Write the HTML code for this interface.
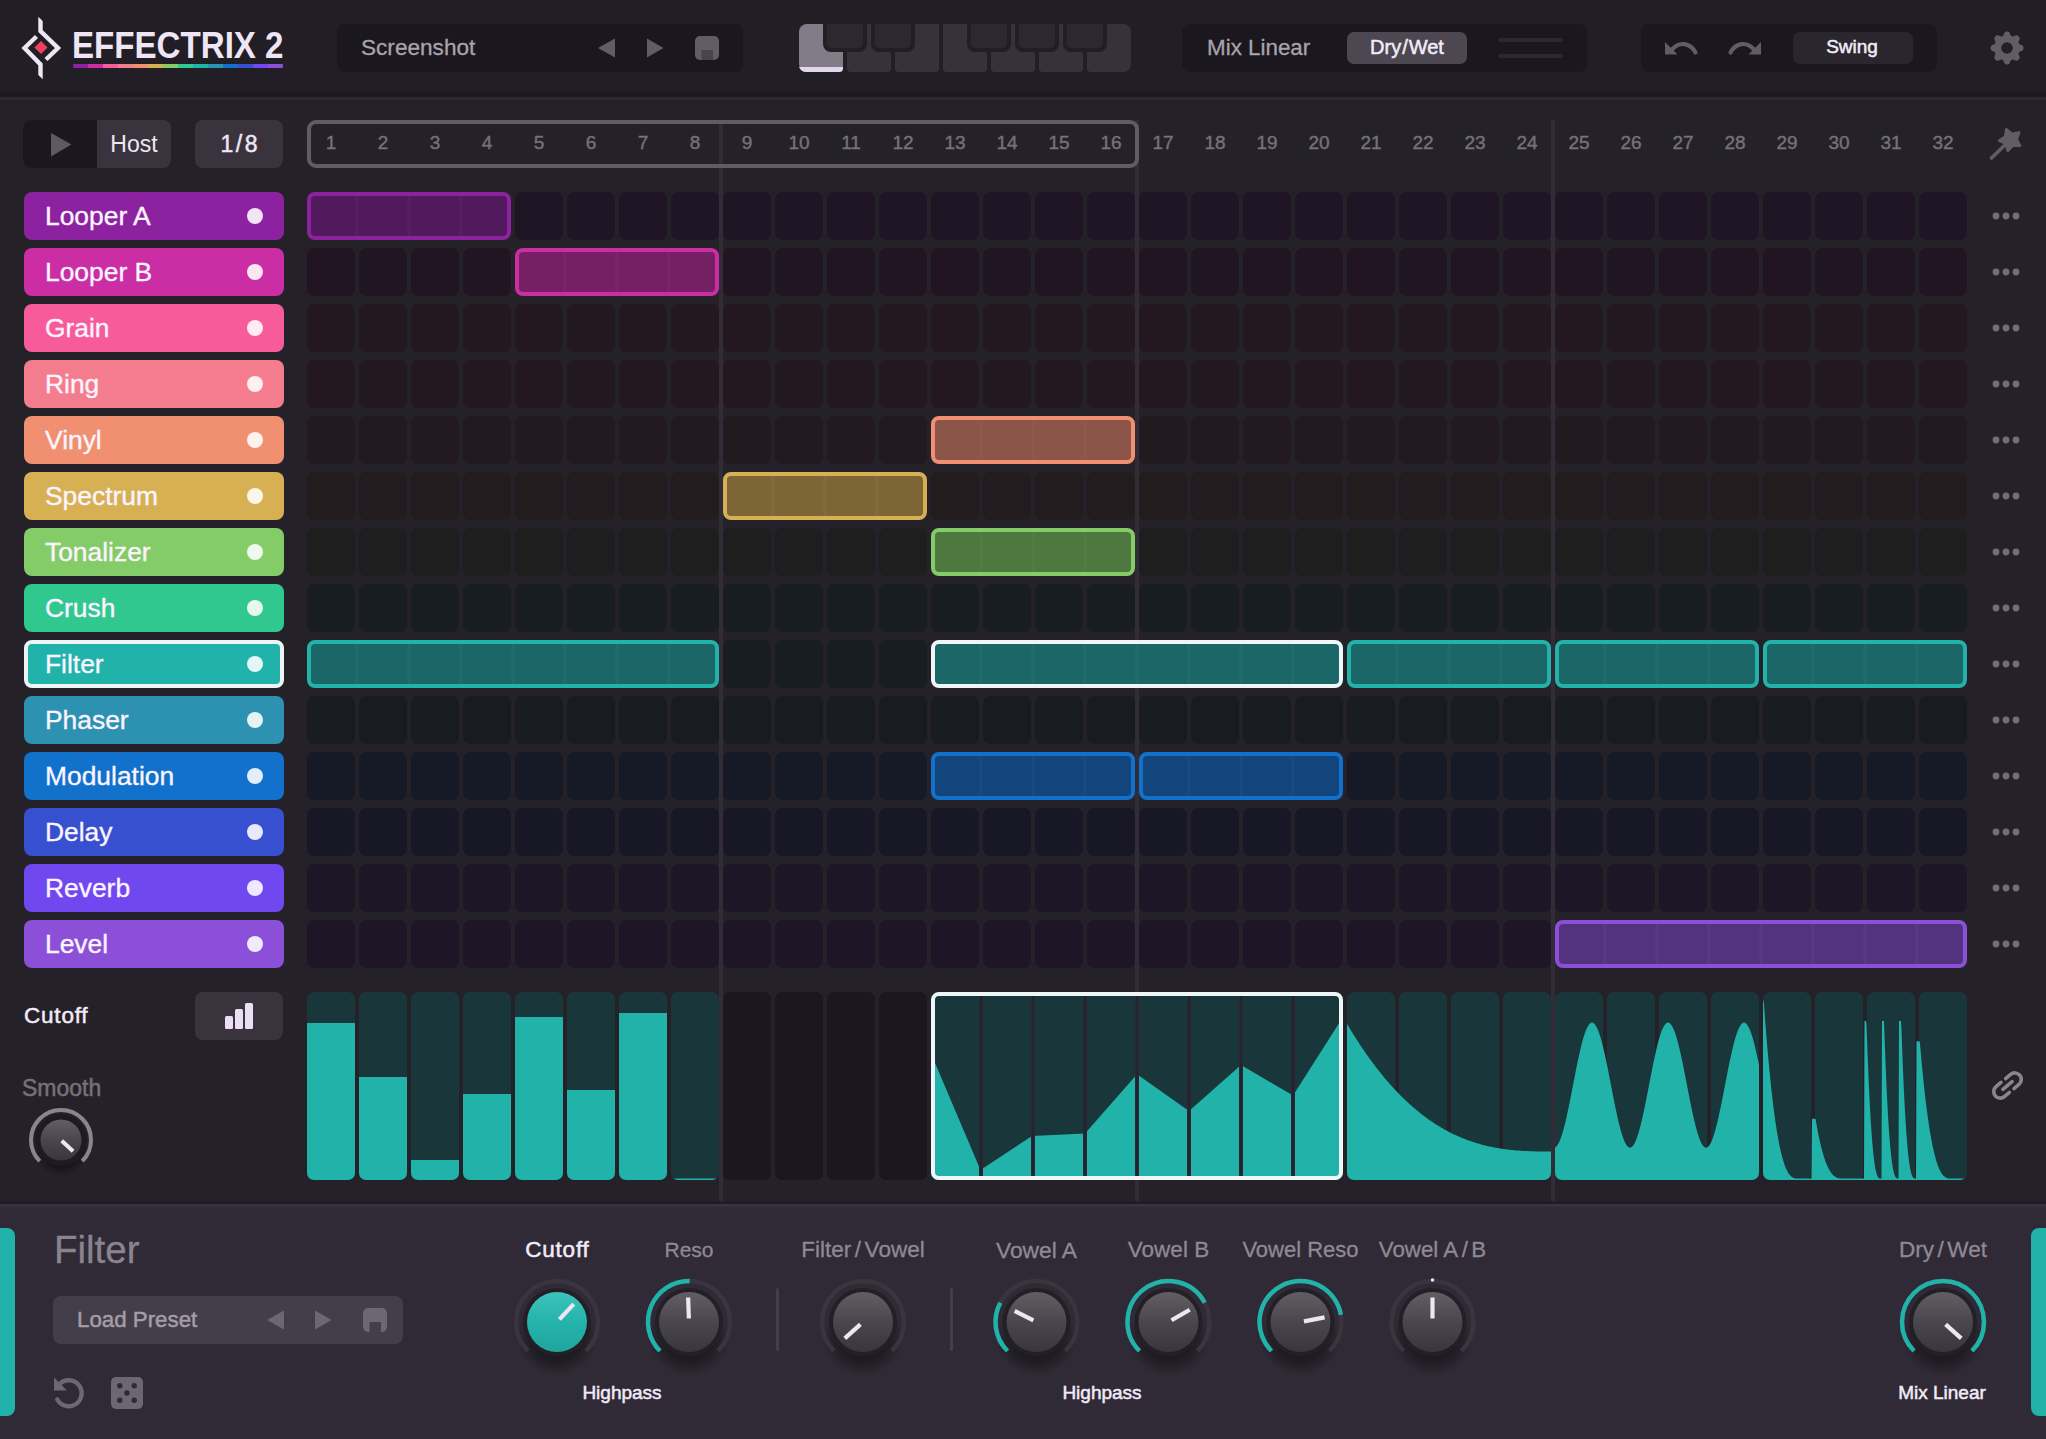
<!DOCTYPE html><html><head><meta charset="utf-8"><title>Effectrix 2</title><style>
*{box-sizing:border-box}
html,body{margin:0;padding:0}
body{width:2046px;height:1439px;overflow:hidden;position:relative;background:#252128;font-family:"Liberation Sans",sans-serif;color:#a9a3ad}
.a{position:absolute}
.box{position:absolute;border-radius:8px}
.t{position:absolute;white-space:nowrap;line-height:1}
.lab{position:absolute;left:24px;width:260px;height:48px;border-radius:8px}
.lab span{position:absolute;left:21px;top:10px;font-size:26.4px;line-height:28px;color:#fbf4ff;white-space:nowrap;-webkit-text-stroke:0.35px #fbf4ff}
.m{-webkit-text-stroke:0.5px currentColor}
.g{-webkit-text-stroke:0.3px currentColor}
.lab i{position:absolute;left:223px;top:16px;width:16px;height:16px;border-radius:50%;background:rgba(255,255,255,0.88)}
.num{position:absolute;top:132px;width:48px;text-align:center;font-size:19px;line-height:22px;color:#76717a;-webkit-text-stroke:0.4px #76717a}
svg{position:absolute;left:0;top:0}
</style></head><body>
<div class="a" style="left:0;top:0;width:2046px;height:93px;background:#221e25"></div>
<div class="a" style="left:0;top:90px;width:2046px;height:7px;background:linear-gradient(#221e25,#1c181f 70%)"></div>
<div class="a" style="left:0;top:97px;width:2046px;height:2.5px;background:#2d2931"></div>
<div class="t" style="left:72px;top:28px;font-size:36.6px;line-height:36px;color:#efe6f5;font-weight:bold;transform-origin:0 0;transform:scaleX(0.905)" id="title">EFFECTRIX 2</div>
<div class="a" style="left:73px;top:64px;width:210px;height:4px;border-radius:1px;overflow:hidden"><i style="display:block;float:left;width:15px;height:4px;background:#8c229f"></i><i style="display:block;float:left;width:15px;height:4px;background:#cb2da5"></i><i style="display:block;float:left;width:15px;height:4px;background:#f85b9a"></i><i style="display:block;float:left;width:15px;height:4px;background:#f47d8d"></i><i style="display:block;float:left;width:15px;height:4px;background:#f09071"></i><i style="display:block;float:left;width:15px;height:4px;background:#d8b054"></i><i style="display:block;float:left;width:15px;height:4px;background:#84cc68"></i><i style="display:block;float:left;width:15px;height:4px;background:#30c88f"></i><i style="display:block;float:left;width:15px;height:4px;background:#21b2aa"></i><i style="display:block;float:left;width:15px;height:4px;background:#2d91b1"></i><i style="display:block;float:left;width:15px;height:4px;background:#1171cb"></i><i style="display:block;float:left;width:15px;height:4px;background:#3650d0"></i><i style="display:block;float:left;width:15px;height:4px;background:#7048f0"></i><i style="display:block;float:left;width:15px;height:4px;background:#8c50d8"></i></div>
<div class="box" style="left:337px;top:24px;width:406px;height:48px;background:#1b171e"></div>
<div class="t" style="left:361px;top:36px;font-size:22.6px;line-height:24px;color:#a9a3ad" id="shot"><span class="g">Screenshot</span></div>
<div class="box" style="left:1182px;top:24px;width:405px;height:48px;background:#1b171e"></div>
<div class="t" style="left:1207px;top:36px;font-size:22.4px;line-height:24px;color:#a9a3ad" id="mixl"><span class="g">Mix Linear</span></div>
<div class="box" style="left:1347px;top:32px;width:120px;height:32px;background:#4c4751;border-radius:7px"></div>
<div class="t" style="left:1347px;top:36px;width:120px;text-align:center;font-size:20px;line-height:22px;color:#f3ebf8" id="dw"><span class="m">Dry<span style="margin:0 1px">/</span>Wet</span></div>
<div class="a" style="left:1498px;top:38px;width:65px;height:4px;border-radius:2px;background:#2c2830"></div>
<div class="a" style="left:1498px;top:54px;width:65px;height:4px;border-radius:2px;background:#2c2830"></div>
<div class="box" style="left:1641px;top:24px;width:296px;height:48px;background:#1b171e"></div>
<div class="box" style="left:1793px;top:32px;width:120px;height:32px;background:#2a262e;border-radius:7px"></div>
<div class="t" style="left:1792px;top:36px;width:120px;text-align:center;font-size:19px;line-height:22px;color:#f3ebf8" id="sw"><span class="m">Swing</span></div>
<div class="box" style="left:23px;top:120px;width:148px;height:48px;background:#38333d;overflow:hidden"><div class="a" style="left:0;top:0;width:74px;height:48px;background:#1b171e"></div></div>
<div class="t" style="left:97px;top:131px;width:74px;text-align:center;font-size:23px;line-height:26px;color:#efe6f5" id="host">Host</div>
<div class="box" style="left:195px;top:120px;width:88px;height:48px;background:#38333d"></div>
<div class="t" style="left:195px;top:131px;width:88px;text-align:center;font-size:23px;line-height:26px;color:#efe6f5;letter-spacing:2.6px;padding-left:2.6px" id="e8"><span class="m">1/8</span></div>
<div class="num" style="left:307px">1</div>
<div class="num" style="left:359px">2</div>
<div class="num" style="left:411px">3</div>
<div class="num" style="left:463px">4</div>
<div class="num" style="left:515px">5</div>
<div class="num" style="left:567px">6</div>
<div class="num" style="left:619px">7</div>
<div class="num" style="left:671px">8</div>
<div class="num" style="left:723px">9</div>
<div class="num" style="left:775px">10</div>
<div class="num" style="left:827px">11</div>
<div class="num" style="left:879px">12</div>
<div class="num" style="left:931px">13</div>
<div class="num" style="left:983px">14</div>
<div class="num" style="left:1035px">15</div>
<div class="num" style="left:1087px">16</div>
<div class="num" style="left:1139px">17</div>
<div class="num" style="left:1191px">18</div>
<div class="num" style="left:1243px">19</div>
<div class="num" style="left:1295px">20</div>
<div class="num" style="left:1347px">21</div>
<div class="num" style="left:1399px">22</div>
<div class="num" style="left:1451px">23</div>
<div class="num" style="left:1503px">24</div>
<div class="num" style="left:1555px">25</div>
<div class="num" style="left:1607px">26</div>
<div class="num" style="left:1659px">27</div>
<div class="num" style="left:1711px">28</div>
<div class="num" style="left:1763px">29</div>
<div class="num" style="left:1815px">30</div>
<div class="num" style="left:1867px">31</div>
<div class="num" style="left:1919px">32</div>
<div class="lab" style="top:192px;background:#8c229f"><span>Looper A</span><i></i></div>
<div class="lab" style="top:248px;background:#cb2da5"><span>Looper B</span><i></i></div>
<div class="lab" style="top:304px;background:#f85b9a"><span>Grain</span><i></i></div>
<div class="lab" style="top:360px;background:#f47d8d"><span>Ring</span><i></i></div>
<div class="lab" style="top:416px;background:#f09071"><span>Vinyl</span><i></i></div>
<div class="lab" style="top:472px;background:#d8b054"><span>Spectrum</span><i></i></div>
<div class="lab" style="top:528px;background:#84cc68"><span>Tonalizer</span><i></i></div>
<div class="lab" style="top:584px;background:#30c88f"><span>Crush</span><i></i></div>
<div class="lab" style="top:640px;background:#21b2aa;border:4px solid #eef3f6"><span style="left:17px;top:6px">Filter</span><i style="left:219px;top:12px"></i></div>
<div class="lab" style="top:696px;background:#2d91b1"><span>Phaser</span><i></i></div>
<div class="lab" style="top:752px;background:#1171cb"><span>Modulation</span><i></i></div>
<div class="lab" style="top:808px;background:#3650d0"><span>Delay</span><i></i></div>
<div class="lab" style="top:864px;background:#7048f0"><span>Reverb</span><i></i></div>
<div class="lab" style="top:920px;background:#8c50d8"><span>Level</span><i></i></div>
<svg width="2046" height="1439" viewBox="0 0 2046 1439"><rect x="719" y="120" width="4" height="1085" fill="#312c35"/><rect x="1135" y="120" width="4" height="1085" fill="#312c35"/><rect x="1551" y="120" width="4" height="1085" fill="#312c35"/><rect x="309" y="122" width="828" height="44" rx="7" fill="none" stroke="#605b64" stroke-width="4"/><rect x="515" y="192" width="48" height="48" rx="7" fill="#201524"/><rect x="567" y="192" width="48" height="48" rx="7" fill="#201524"/><rect x="619" y="192" width="48" height="48" rx="7" fill="#201524"/><rect x="671" y="192" width="48" height="48" rx="7" fill="#201524"/><rect x="723" y="192" width="48" height="48" rx="7" fill="#201524"/><rect x="775" y="192" width="48" height="48" rx="7" fill="#201524"/><rect x="827" y="192" width="48" height="48" rx="7" fill="#201524"/><rect x="879" y="192" width="48" height="48" rx="7" fill="#201524"/><rect x="931" y="192" width="48" height="48" rx="7" fill="#201524"/><rect x="983" y="192" width="48" height="48" rx="7" fill="#201524"/><rect x="1035" y="192" width="48" height="48" rx="7" fill="#201524"/><rect x="1087" y="192" width="48" height="48" rx="7" fill="#201524"/><rect x="1139" y="192" width="48" height="48" rx="7" fill="#201524"/><rect x="1191" y="192" width="48" height="48" rx="7" fill="#201524"/><rect x="1243" y="192" width="48" height="48" rx="7" fill="#201524"/><rect x="1295" y="192" width="48" height="48" rx="7" fill="#201524"/><rect x="1347" y="192" width="48" height="48" rx="7" fill="#201524"/><rect x="1399" y="192" width="48" height="48" rx="7" fill="#201524"/><rect x="1451" y="192" width="48" height="48" rx="7" fill="#201524"/><rect x="1503" y="192" width="48" height="48" rx="7" fill="#201524"/><rect x="1555" y="192" width="48" height="48" rx="7" fill="#201524"/><rect x="1607" y="192" width="48" height="48" rx="7" fill="#201524"/><rect x="1659" y="192" width="48" height="48" rx="7" fill="#201524"/><rect x="1711" y="192" width="48" height="48" rx="7" fill="#201524"/><rect x="1763" y="192" width="48" height="48" rx="7" fill="#201524"/><rect x="1815" y="192" width="48" height="48" rx="7" fill="#201524"/><rect x="1867" y="192" width="48" height="48" rx="7" fill="#201524"/><rect x="1919" y="192" width="48" height="48" rx="7" fill="#201524"/><rect x="309" y="194" width="200" height="44" rx="6" fill="#53195f" stroke="#8c229f" stroke-width="4"/><rect x="355" y="196" width="4" height="40" fill="#ffffff" opacity="0.017"/><rect x="356" y="196" width="2" height="40" fill="#ffffff" opacity="0.017"/><rect x="407" y="196" width="4" height="40" fill="#ffffff" opacity="0.017"/><rect x="408" y="196" width="2" height="40" fill="#ffffff" opacity="0.017"/><rect x="459" y="196" width="4" height="40" fill="#ffffff" opacity="0.017"/><rect x="460" y="196" width="2" height="40" fill="#ffffff" opacity="0.017"/><circle cx="1996" cy="216" r="3.4" fill="#726d77"/><circle cx="2006" cy="216" r="3.4" fill="#726d77"/><circle cx="2016" cy="216" r="3.4" fill="#726d77"/><rect x="307" y="248" width="48" height="48" rx="7" fill="#221523"/><rect x="359" y="248" width="48" height="48" rx="7" fill="#221523"/><rect x="411" y="248" width="48" height="48" rx="7" fill="#221523"/><rect x="463" y="248" width="48" height="48" rx="7" fill="#221523"/><rect x="723" y="248" width="48" height="48" rx="7" fill="#221523"/><rect x="775" y="248" width="48" height="48" rx="7" fill="#221523"/><rect x="827" y="248" width="48" height="48" rx="7" fill="#221523"/><rect x="879" y="248" width="48" height="48" rx="7" fill="#221523"/><rect x="931" y="248" width="48" height="48" rx="7" fill="#221523"/><rect x="983" y="248" width="48" height="48" rx="7" fill="#221523"/><rect x="1035" y="248" width="48" height="48" rx="7" fill="#221523"/><rect x="1087" y="248" width="48" height="48" rx="7" fill="#221523"/><rect x="1139" y="248" width="48" height="48" rx="7" fill="#221523"/><rect x="1191" y="248" width="48" height="48" rx="7" fill="#221523"/><rect x="1243" y="248" width="48" height="48" rx="7" fill="#221523"/><rect x="1295" y="248" width="48" height="48" rx="7" fill="#221523"/><rect x="1347" y="248" width="48" height="48" rx="7" fill="#221523"/><rect x="1399" y="248" width="48" height="48" rx="7" fill="#221523"/><rect x="1451" y="248" width="48" height="48" rx="7" fill="#221523"/><rect x="1503" y="248" width="48" height="48" rx="7" fill="#221523"/><rect x="1555" y="248" width="48" height="48" rx="7" fill="#221523"/><rect x="1607" y="248" width="48" height="48" rx="7" fill="#221523"/><rect x="1659" y="248" width="48" height="48" rx="7" fill="#221523"/><rect x="1711" y="248" width="48" height="48" rx="7" fill="#221523"/><rect x="1763" y="248" width="48" height="48" rx="7" fill="#221523"/><rect x="1815" y="248" width="48" height="48" rx="7" fill="#221523"/><rect x="1867" y="248" width="48" height="48" rx="7" fill="#221523"/><rect x="1919" y="248" width="48" height="48" rx="7" fill="#221523"/><rect x="517" y="250" width="200" height="44" rx="6" fill="#752063" stroke="#cb2da5" stroke-width="4"/><rect x="563" y="252" width="4" height="40" fill="#ffffff" opacity="0.017"/><rect x="564" y="252" width="2" height="40" fill="#ffffff" opacity="0.017"/><rect x="615" y="252" width="4" height="40" fill="#ffffff" opacity="0.017"/><rect x="616" y="252" width="2" height="40" fill="#ffffff" opacity="0.017"/><rect x="667" y="252" width="4" height="40" fill="#ffffff" opacity="0.017"/><rect x="668" y="252" width="2" height="40" fill="#ffffff" opacity="0.017"/><circle cx="1996" cy="272" r="3.4" fill="#726d77"/><circle cx="2006" cy="272" r="3.4" fill="#726d77"/><circle cx="2016" cy="272" r="3.4" fill="#726d77"/><rect x="307" y="304" width="48" height="48" rx="7" fill="#231720"/><rect x="359" y="304" width="48" height="48" rx="7" fill="#231720"/><rect x="411" y="304" width="48" height="48" rx="7" fill="#231720"/><rect x="463" y="304" width="48" height="48" rx="7" fill="#231720"/><rect x="515" y="304" width="48" height="48" rx="7" fill="#231720"/><rect x="567" y="304" width="48" height="48" rx="7" fill="#231720"/><rect x="619" y="304" width="48" height="48" rx="7" fill="#231720"/><rect x="671" y="304" width="48" height="48" rx="7" fill="#231720"/><rect x="723" y="304" width="48" height="48" rx="7" fill="#231720"/><rect x="775" y="304" width="48" height="48" rx="7" fill="#231720"/><rect x="827" y="304" width="48" height="48" rx="7" fill="#231720"/><rect x="879" y="304" width="48" height="48" rx="7" fill="#231720"/><rect x="931" y="304" width="48" height="48" rx="7" fill="#231720"/><rect x="983" y="304" width="48" height="48" rx="7" fill="#231720"/><rect x="1035" y="304" width="48" height="48" rx="7" fill="#231720"/><rect x="1087" y="304" width="48" height="48" rx="7" fill="#231720"/><rect x="1139" y="304" width="48" height="48" rx="7" fill="#231720"/><rect x="1191" y="304" width="48" height="48" rx="7" fill="#231720"/><rect x="1243" y="304" width="48" height="48" rx="7" fill="#231720"/><rect x="1295" y="304" width="48" height="48" rx="7" fill="#231720"/><rect x="1347" y="304" width="48" height="48" rx="7" fill="#231720"/><rect x="1399" y="304" width="48" height="48" rx="7" fill="#231720"/><rect x="1451" y="304" width="48" height="48" rx="7" fill="#231720"/><rect x="1503" y="304" width="48" height="48" rx="7" fill="#231720"/><rect x="1555" y="304" width="48" height="48" rx="7" fill="#231720"/><rect x="1607" y="304" width="48" height="48" rx="7" fill="#231720"/><rect x="1659" y="304" width="48" height="48" rx="7" fill="#231720"/><rect x="1711" y="304" width="48" height="48" rx="7" fill="#231720"/><rect x="1763" y="304" width="48" height="48" rx="7" fill="#231720"/><rect x="1815" y="304" width="48" height="48" rx="7" fill="#231720"/><rect x="1867" y="304" width="48" height="48" rx="7" fill="#231720"/><rect x="1919" y="304" width="48" height="48" rx="7" fill="#231720"/><circle cx="1996" cy="328" r="3.4" fill="#726d77"/><circle cx="2006" cy="328" r="3.4" fill="#726d77"/><circle cx="2016" cy="328" r="3.4" fill="#726d77"/><rect x="307" y="360" width="48" height="48" rx="7" fill="#231820"/><rect x="359" y="360" width="48" height="48" rx="7" fill="#231820"/><rect x="411" y="360" width="48" height="48" rx="7" fill="#231820"/><rect x="463" y="360" width="48" height="48" rx="7" fill="#231820"/><rect x="515" y="360" width="48" height="48" rx="7" fill="#231820"/><rect x="567" y="360" width="48" height="48" rx="7" fill="#231820"/><rect x="619" y="360" width="48" height="48" rx="7" fill="#231820"/><rect x="671" y="360" width="48" height="48" rx="7" fill="#231820"/><rect x="723" y="360" width="48" height="48" rx="7" fill="#231820"/><rect x="775" y="360" width="48" height="48" rx="7" fill="#231820"/><rect x="827" y="360" width="48" height="48" rx="7" fill="#231820"/><rect x="879" y="360" width="48" height="48" rx="7" fill="#231820"/><rect x="931" y="360" width="48" height="48" rx="7" fill="#231820"/><rect x="983" y="360" width="48" height="48" rx="7" fill="#231820"/><rect x="1035" y="360" width="48" height="48" rx="7" fill="#231820"/><rect x="1087" y="360" width="48" height="48" rx="7" fill="#231820"/><rect x="1139" y="360" width="48" height="48" rx="7" fill="#231820"/><rect x="1191" y="360" width="48" height="48" rx="7" fill="#231820"/><rect x="1243" y="360" width="48" height="48" rx="7" fill="#231820"/><rect x="1295" y="360" width="48" height="48" rx="7" fill="#231820"/><rect x="1347" y="360" width="48" height="48" rx="7" fill="#231820"/><rect x="1399" y="360" width="48" height="48" rx="7" fill="#231820"/><rect x="1451" y="360" width="48" height="48" rx="7" fill="#231820"/><rect x="1503" y="360" width="48" height="48" rx="7" fill="#231820"/><rect x="1555" y="360" width="48" height="48" rx="7" fill="#231820"/><rect x="1607" y="360" width="48" height="48" rx="7" fill="#231820"/><rect x="1659" y="360" width="48" height="48" rx="7" fill="#231820"/><rect x="1711" y="360" width="48" height="48" rx="7" fill="#231820"/><rect x="1763" y="360" width="48" height="48" rx="7" fill="#231820"/><rect x="1815" y="360" width="48" height="48" rx="7" fill="#231820"/><rect x="1867" y="360" width="48" height="48" rx="7" fill="#231820"/><rect x="1919" y="360" width="48" height="48" rx="7" fill="#231820"/><circle cx="1996" cy="384" r="3.4" fill="#726d77"/><circle cx="2006" cy="384" r="3.4" fill="#726d77"/><circle cx="2016" cy="384" r="3.4" fill="#726d77"/><rect x="307" y="416" width="48" height="48" rx="7" fill="#231a1f"/><rect x="359" y="416" width="48" height="48" rx="7" fill="#231a1f"/><rect x="411" y="416" width="48" height="48" rx="7" fill="#231a1f"/><rect x="463" y="416" width="48" height="48" rx="7" fill="#231a1f"/><rect x="515" y="416" width="48" height="48" rx="7" fill="#231a1f"/><rect x="567" y="416" width="48" height="48" rx="7" fill="#231a1f"/><rect x="619" y="416" width="48" height="48" rx="7" fill="#231a1f"/><rect x="671" y="416" width="48" height="48" rx="7" fill="#231a1f"/><rect x="723" y="416" width="48" height="48" rx="7" fill="#231a1f"/><rect x="775" y="416" width="48" height="48" rx="7" fill="#231a1f"/><rect x="827" y="416" width="48" height="48" rx="7" fill="#231a1f"/><rect x="879" y="416" width="48" height="48" rx="7" fill="#231a1f"/><rect x="1139" y="416" width="48" height="48" rx="7" fill="#231a1f"/><rect x="1191" y="416" width="48" height="48" rx="7" fill="#231a1f"/><rect x="1243" y="416" width="48" height="48" rx="7" fill="#231a1f"/><rect x="1295" y="416" width="48" height="48" rx="7" fill="#231a1f"/><rect x="1347" y="416" width="48" height="48" rx="7" fill="#231a1f"/><rect x="1399" y="416" width="48" height="48" rx="7" fill="#231a1f"/><rect x="1451" y="416" width="48" height="48" rx="7" fill="#231a1f"/><rect x="1503" y="416" width="48" height="48" rx="7" fill="#231a1f"/><rect x="1555" y="416" width="48" height="48" rx="7" fill="#231a1f"/><rect x="1607" y="416" width="48" height="48" rx="7" fill="#231a1f"/><rect x="1659" y="416" width="48" height="48" rx="7" fill="#231a1f"/><rect x="1711" y="416" width="48" height="48" rx="7" fill="#231a1f"/><rect x="1763" y="416" width="48" height="48" rx="7" fill="#231a1f"/><rect x="1815" y="416" width="48" height="48" rx="7" fill="#231a1f"/><rect x="1867" y="416" width="48" height="48" rx="7" fill="#231a1f"/><rect x="1919" y="416" width="48" height="48" rx="7" fill="#231a1f"/><rect x="933" y="418" width="200" height="44" rx="6" fill="#8b5549" stroke="#f09071" stroke-width="4"/><rect x="979" y="420" width="4" height="40" fill="#ffffff" opacity="0.017"/><rect x="980" y="420" width="2" height="40" fill="#ffffff" opacity="0.017"/><rect x="1031" y="420" width="4" height="40" fill="#ffffff" opacity="0.017"/><rect x="1032" y="420" width="2" height="40" fill="#ffffff" opacity="0.017"/><rect x="1083" y="420" width="4" height="40" fill="#ffffff" opacity="0.017"/><rect x="1084" y="420" width="2" height="40" fill="#ffffff" opacity="0.017"/><circle cx="1996" cy="440" r="3.4" fill="#726d77"/><circle cx="2006" cy="440" r="3.4" fill="#726d77"/><circle cx="2016" cy="440" r="3.4" fill="#726d77"/><rect x="307" y="472" width="48" height="48" rx="7" fill="#221c1e"/><rect x="359" y="472" width="48" height="48" rx="7" fill="#221c1e"/><rect x="411" y="472" width="48" height="48" rx="7" fill="#221c1e"/><rect x="463" y="472" width="48" height="48" rx="7" fill="#221c1e"/><rect x="515" y="472" width="48" height="48" rx="7" fill="#221c1e"/><rect x="567" y="472" width="48" height="48" rx="7" fill="#221c1e"/><rect x="619" y="472" width="48" height="48" rx="7" fill="#221c1e"/><rect x="671" y="472" width="48" height="48" rx="7" fill="#221c1e"/><rect x="931" y="472" width="48" height="48" rx="7" fill="#221c1e"/><rect x="983" y="472" width="48" height="48" rx="7" fill="#221c1e"/><rect x="1035" y="472" width="48" height="48" rx="7" fill="#221c1e"/><rect x="1087" y="472" width="48" height="48" rx="7" fill="#221c1e"/><rect x="1139" y="472" width="48" height="48" rx="7" fill="#221c1e"/><rect x="1191" y="472" width="48" height="48" rx="7" fill="#221c1e"/><rect x="1243" y="472" width="48" height="48" rx="7" fill="#221c1e"/><rect x="1295" y="472" width="48" height="48" rx="7" fill="#221c1e"/><rect x="1347" y="472" width="48" height="48" rx="7" fill="#221c1e"/><rect x="1399" y="472" width="48" height="48" rx="7" fill="#221c1e"/><rect x="1451" y="472" width="48" height="48" rx="7" fill="#221c1e"/><rect x="1503" y="472" width="48" height="48" rx="7" fill="#221c1e"/><rect x="1555" y="472" width="48" height="48" rx="7" fill="#221c1e"/><rect x="1607" y="472" width="48" height="48" rx="7" fill="#221c1e"/><rect x="1659" y="472" width="48" height="48" rx="7" fill="#221c1e"/><rect x="1711" y="472" width="48" height="48" rx="7" fill="#221c1e"/><rect x="1763" y="472" width="48" height="48" rx="7" fill="#221c1e"/><rect x="1815" y="472" width="48" height="48" rx="7" fill="#221c1e"/><rect x="1867" y="472" width="48" height="48" rx="7" fill="#221c1e"/><rect x="1919" y="472" width="48" height="48" rx="7" fill="#221c1e"/><rect x="725" y="474" width="200" height="44" rx="6" fill="#7d6636" stroke="#d8b054" stroke-width="4"/><rect x="771" y="476" width="4" height="40" fill="#ffffff" opacity="0.017"/><rect x="772" y="476" width="2" height="40" fill="#ffffff" opacity="0.017"/><rect x="823" y="476" width="4" height="40" fill="#ffffff" opacity="0.017"/><rect x="824" y="476" width="2" height="40" fill="#ffffff" opacity="0.017"/><rect x="875" y="476" width="4" height="40" fill="#ffffff" opacity="0.017"/><rect x="876" y="476" width="2" height="40" fill="#ffffff" opacity="0.017"/><circle cx="1996" cy="496" r="3.4" fill="#726d77"/><circle cx="2006" cy="496" r="3.4" fill="#726d77"/><circle cx="2016" cy="496" r="3.4" fill="#726d77"/><rect x="307" y="528" width="48" height="48" rx="7" fill="#1e1e1e"/><rect x="359" y="528" width="48" height="48" rx="7" fill="#1e1e1e"/><rect x="411" y="528" width="48" height="48" rx="7" fill="#1e1e1e"/><rect x="463" y="528" width="48" height="48" rx="7" fill="#1e1e1e"/><rect x="515" y="528" width="48" height="48" rx="7" fill="#1e1e1e"/><rect x="567" y="528" width="48" height="48" rx="7" fill="#1e1e1e"/><rect x="619" y="528" width="48" height="48" rx="7" fill="#1e1e1e"/><rect x="671" y="528" width="48" height="48" rx="7" fill="#1e1e1e"/><rect x="723" y="528" width="48" height="48" rx="7" fill="#1e1e1e"/><rect x="775" y="528" width="48" height="48" rx="7" fill="#1e1e1e"/><rect x="827" y="528" width="48" height="48" rx="7" fill="#1e1e1e"/><rect x="879" y="528" width="48" height="48" rx="7" fill="#1e1e1e"/><rect x="1139" y="528" width="48" height="48" rx="7" fill="#1e1e1e"/><rect x="1191" y="528" width="48" height="48" rx="7" fill="#1e1e1e"/><rect x="1243" y="528" width="48" height="48" rx="7" fill="#1e1e1e"/><rect x="1295" y="528" width="48" height="48" rx="7" fill="#1e1e1e"/><rect x="1347" y="528" width="48" height="48" rx="7" fill="#1e1e1e"/><rect x="1399" y="528" width="48" height="48" rx="7" fill="#1e1e1e"/><rect x="1451" y="528" width="48" height="48" rx="7" fill="#1e1e1e"/><rect x="1503" y="528" width="48" height="48" rx="7" fill="#1e1e1e"/><rect x="1555" y="528" width="48" height="48" rx="7" fill="#1e1e1e"/><rect x="1607" y="528" width="48" height="48" rx="7" fill="#1e1e1e"/><rect x="1659" y="528" width="48" height="48" rx="7" fill="#1e1e1e"/><rect x="1711" y="528" width="48" height="48" rx="7" fill="#1e1e1e"/><rect x="1763" y="528" width="48" height="48" rx="7" fill="#1e1e1e"/><rect x="1815" y="528" width="48" height="48" rx="7" fill="#1e1e1e"/><rect x="1867" y="528" width="48" height="48" rx="7" fill="#1e1e1e"/><rect x="1919" y="528" width="48" height="48" rx="7" fill="#1e1e1e"/><rect x="933" y="530" width="200" height="44" rx="6" fill="#4f7840" stroke="#84cc68" stroke-width="4"/><rect x="979" y="532" width="4" height="40" fill="#ffffff" opacity="0.017"/><rect x="980" y="532" width="2" height="40" fill="#ffffff" opacity="0.017"/><rect x="1031" y="532" width="4" height="40" fill="#ffffff" opacity="0.017"/><rect x="1032" y="532" width="2" height="40" fill="#ffffff" opacity="0.017"/><rect x="1083" y="532" width="4" height="40" fill="#ffffff" opacity="0.017"/><rect x="1084" y="532" width="2" height="40" fill="#ffffff" opacity="0.017"/><circle cx="1996" cy="552" r="3.4" fill="#726d77"/><circle cx="2006" cy="552" r="3.4" fill="#726d77"/><circle cx="2016" cy="552" r="3.4" fill="#726d77"/><rect x="307" y="584" width="48" height="48" rx="7" fill="#171d20"/><rect x="359" y="584" width="48" height="48" rx="7" fill="#171d20"/><rect x="411" y="584" width="48" height="48" rx="7" fill="#171d20"/><rect x="463" y="584" width="48" height="48" rx="7" fill="#171d20"/><rect x="515" y="584" width="48" height="48" rx="7" fill="#171d20"/><rect x="567" y="584" width="48" height="48" rx="7" fill="#171d20"/><rect x="619" y="584" width="48" height="48" rx="7" fill="#171d20"/><rect x="671" y="584" width="48" height="48" rx="7" fill="#171d20"/><rect x="723" y="584" width="48" height="48" rx="7" fill="#171d20"/><rect x="775" y="584" width="48" height="48" rx="7" fill="#171d20"/><rect x="827" y="584" width="48" height="48" rx="7" fill="#171d20"/><rect x="879" y="584" width="48" height="48" rx="7" fill="#171d20"/><rect x="931" y="584" width="48" height="48" rx="7" fill="#171d20"/><rect x="983" y="584" width="48" height="48" rx="7" fill="#171d20"/><rect x="1035" y="584" width="48" height="48" rx="7" fill="#171d20"/><rect x="1087" y="584" width="48" height="48" rx="7" fill="#171d20"/><rect x="1139" y="584" width="48" height="48" rx="7" fill="#171d20"/><rect x="1191" y="584" width="48" height="48" rx="7" fill="#171d20"/><rect x="1243" y="584" width="48" height="48" rx="7" fill="#171d20"/><rect x="1295" y="584" width="48" height="48" rx="7" fill="#171d20"/><rect x="1347" y="584" width="48" height="48" rx="7" fill="#171d20"/><rect x="1399" y="584" width="48" height="48" rx="7" fill="#171d20"/><rect x="1451" y="584" width="48" height="48" rx="7" fill="#171d20"/><rect x="1503" y="584" width="48" height="48" rx="7" fill="#171d20"/><rect x="1555" y="584" width="48" height="48" rx="7" fill="#171d20"/><rect x="1607" y="584" width="48" height="48" rx="7" fill="#171d20"/><rect x="1659" y="584" width="48" height="48" rx="7" fill="#171d20"/><rect x="1711" y="584" width="48" height="48" rx="7" fill="#171d20"/><rect x="1763" y="584" width="48" height="48" rx="7" fill="#171d20"/><rect x="1815" y="584" width="48" height="48" rx="7" fill="#171d20"/><rect x="1867" y="584" width="48" height="48" rx="7" fill="#171d20"/><rect x="1919" y="584" width="48" height="48" rx="7" fill="#171d20"/><circle cx="1996" cy="608" r="3.4" fill="#726d77"/><circle cx="2006" cy="608" r="3.4" fill="#726d77"/><circle cx="2016" cy="608" r="3.4" fill="#726d77"/><rect x="723" y="640" width="48" height="48" rx="7" fill="#171d21"/><rect x="775" y="640" width="48" height="48" rx="7" fill="#171d21"/><rect x="827" y="640" width="48" height="48" rx="7" fill="#171d21"/><rect x="879" y="640" width="48" height="48" rx="7" fill="#171d21"/><rect x="309" y="642" width="408" height="44" rx="6" fill="#1b6768" stroke="#21b2aa" stroke-width="4"/><rect x="355" y="644" width="4" height="40" fill="#ffffff" opacity="0.017"/><rect x="356" y="644" width="2" height="40" fill="#ffffff" opacity="0.017"/><rect x="407" y="644" width="4" height="40" fill="#ffffff" opacity="0.017"/><rect x="408" y="644" width="2" height="40" fill="#ffffff" opacity="0.017"/><rect x="459" y="644" width="4" height="40" fill="#ffffff" opacity="0.017"/><rect x="460" y="644" width="2" height="40" fill="#ffffff" opacity="0.017"/><rect x="511" y="644" width="4" height="40" fill="#ffffff" opacity="0.017"/><rect x="512" y="644" width="2" height="40" fill="#ffffff" opacity="0.017"/><rect x="563" y="644" width="4" height="40" fill="#ffffff" opacity="0.017"/><rect x="564" y="644" width="2" height="40" fill="#ffffff" opacity="0.017"/><rect x="615" y="644" width="4" height="40" fill="#ffffff" opacity="0.017"/><rect x="616" y="644" width="2" height="40" fill="#ffffff" opacity="0.017"/><rect x="667" y="644" width="4" height="40" fill="#ffffff" opacity="0.017"/><rect x="668" y="644" width="2" height="40" fill="#ffffff" opacity="0.017"/><rect x="933" y="642" width="408" height="44" rx="6" fill="#1b6768" stroke="#eef6f8" stroke-width="4"/><rect x="979" y="644" width="4" height="40" fill="#ffffff" opacity="0.017"/><rect x="980" y="644" width="2" height="40" fill="#ffffff" opacity="0.017"/><rect x="1031" y="644" width="4" height="40" fill="#ffffff" opacity="0.017"/><rect x="1032" y="644" width="2" height="40" fill="#ffffff" opacity="0.017"/><rect x="1083" y="644" width="4" height="40" fill="#ffffff" opacity="0.017"/><rect x="1084" y="644" width="2" height="40" fill="#ffffff" opacity="0.017"/><rect x="1135" y="644" width="4" height="40" fill="#ffffff" opacity="0.017"/><rect x="1136" y="644" width="2" height="40" fill="#ffffff" opacity="0.017"/><rect x="1187" y="644" width="4" height="40" fill="#ffffff" opacity="0.017"/><rect x="1188" y="644" width="2" height="40" fill="#ffffff" opacity="0.017"/><rect x="1239" y="644" width="4" height="40" fill="#ffffff" opacity="0.017"/><rect x="1240" y="644" width="2" height="40" fill="#ffffff" opacity="0.017"/><rect x="1291" y="644" width="4" height="40" fill="#ffffff" opacity="0.017"/><rect x="1292" y="644" width="2" height="40" fill="#ffffff" opacity="0.017"/><rect x="1349" y="642" width="200" height="44" rx="6" fill="#1b6768" stroke="#21b2aa" stroke-width="4"/><rect x="1395" y="644" width="4" height="40" fill="#ffffff" opacity="0.017"/><rect x="1396" y="644" width="2" height="40" fill="#ffffff" opacity="0.017"/><rect x="1447" y="644" width="4" height="40" fill="#ffffff" opacity="0.017"/><rect x="1448" y="644" width="2" height="40" fill="#ffffff" opacity="0.017"/><rect x="1499" y="644" width="4" height="40" fill="#ffffff" opacity="0.017"/><rect x="1500" y="644" width="2" height="40" fill="#ffffff" opacity="0.017"/><rect x="1557" y="642" width="200" height="44" rx="6" fill="#1b6768" stroke="#21b2aa" stroke-width="4"/><rect x="1603" y="644" width="4" height="40" fill="#ffffff" opacity="0.017"/><rect x="1604" y="644" width="2" height="40" fill="#ffffff" opacity="0.017"/><rect x="1655" y="644" width="4" height="40" fill="#ffffff" opacity="0.017"/><rect x="1656" y="644" width="2" height="40" fill="#ffffff" opacity="0.017"/><rect x="1707" y="644" width="4" height="40" fill="#ffffff" opacity="0.017"/><rect x="1708" y="644" width="2" height="40" fill="#ffffff" opacity="0.017"/><rect x="1765" y="642" width="200" height="44" rx="6" fill="#1b6768" stroke="#21b2aa" stroke-width="4"/><rect x="1811" y="644" width="4" height="40" fill="#ffffff" opacity="0.017"/><rect x="1812" y="644" width="2" height="40" fill="#ffffff" opacity="0.017"/><rect x="1863" y="644" width="4" height="40" fill="#ffffff" opacity="0.017"/><rect x="1864" y="644" width="2" height="40" fill="#ffffff" opacity="0.017"/><rect x="1915" y="644" width="4" height="40" fill="#ffffff" opacity="0.017"/><rect x="1916" y="644" width="2" height="40" fill="#ffffff" opacity="0.017"/><circle cx="1996" cy="664" r="3.4" fill="#726d77"/><circle cx="2006" cy="664" r="3.4" fill="#726d77"/><circle cx="2016" cy="664" r="3.4" fill="#726d77"/><rect x="307" y="696" width="48" height="48" rx="7" fill="#181c22"/><rect x="359" y="696" width="48" height="48" rx="7" fill="#181c22"/><rect x="411" y="696" width="48" height="48" rx="7" fill="#181c22"/><rect x="463" y="696" width="48" height="48" rx="7" fill="#181c22"/><rect x="515" y="696" width="48" height="48" rx="7" fill="#181c22"/><rect x="567" y="696" width="48" height="48" rx="7" fill="#181c22"/><rect x="619" y="696" width="48" height="48" rx="7" fill="#181c22"/><rect x="671" y="696" width="48" height="48" rx="7" fill="#181c22"/><rect x="723" y="696" width="48" height="48" rx="7" fill="#181c22"/><rect x="775" y="696" width="48" height="48" rx="7" fill="#181c22"/><rect x="827" y="696" width="48" height="48" rx="7" fill="#181c22"/><rect x="879" y="696" width="48" height="48" rx="7" fill="#181c22"/><rect x="931" y="696" width="48" height="48" rx="7" fill="#181c22"/><rect x="983" y="696" width="48" height="48" rx="7" fill="#181c22"/><rect x="1035" y="696" width="48" height="48" rx="7" fill="#181c22"/><rect x="1087" y="696" width="48" height="48" rx="7" fill="#181c22"/><rect x="1139" y="696" width="48" height="48" rx="7" fill="#181c22"/><rect x="1191" y="696" width="48" height="48" rx="7" fill="#181c22"/><rect x="1243" y="696" width="48" height="48" rx="7" fill="#181c22"/><rect x="1295" y="696" width="48" height="48" rx="7" fill="#181c22"/><rect x="1347" y="696" width="48" height="48" rx="7" fill="#181c22"/><rect x="1399" y="696" width="48" height="48" rx="7" fill="#181c22"/><rect x="1451" y="696" width="48" height="48" rx="7" fill="#181c22"/><rect x="1503" y="696" width="48" height="48" rx="7" fill="#181c22"/><rect x="1555" y="696" width="48" height="48" rx="7" fill="#181c22"/><rect x="1607" y="696" width="48" height="48" rx="7" fill="#181c22"/><rect x="1659" y="696" width="48" height="48" rx="7" fill="#181c22"/><rect x="1711" y="696" width="48" height="48" rx="7" fill="#181c22"/><rect x="1763" y="696" width="48" height="48" rx="7" fill="#181c22"/><rect x="1815" y="696" width="48" height="48" rx="7" fill="#181c22"/><rect x="1867" y="696" width="48" height="48" rx="7" fill="#181c22"/><rect x="1919" y="696" width="48" height="48" rx="7" fill="#181c22"/><circle cx="1996" cy="720" r="3.4" fill="#726d77"/><circle cx="2006" cy="720" r="3.4" fill="#726d77"/><circle cx="2016" cy="720" r="3.4" fill="#726d77"/><rect x="307" y="752" width="48" height="48" rx="7" fill="#151a26"/><rect x="359" y="752" width="48" height="48" rx="7" fill="#151a26"/><rect x="411" y="752" width="48" height="48" rx="7" fill="#151a26"/><rect x="463" y="752" width="48" height="48" rx="7" fill="#151a26"/><rect x="515" y="752" width="48" height="48" rx="7" fill="#151a26"/><rect x="567" y="752" width="48" height="48" rx="7" fill="#151a26"/><rect x="619" y="752" width="48" height="48" rx="7" fill="#151a26"/><rect x="671" y="752" width="48" height="48" rx="7" fill="#151a26"/><rect x="723" y="752" width="48" height="48" rx="7" fill="#151a26"/><rect x="775" y="752" width="48" height="48" rx="7" fill="#151a26"/><rect x="827" y="752" width="48" height="48" rx="7" fill="#151a26"/><rect x="879" y="752" width="48" height="48" rx="7" fill="#151a26"/><rect x="1347" y="752" width="48" height="48" rx="7" fill="#151a26"/><rect x="1399" y="752" width="48" height="48" rx="7" fill="#151a26"/><rect x="1451" y="752" width="48" height="48" rx="7" fill="#151a26"/><rect x="1503" y="752" width="48" height="48" rx="7" fill="#151a26"/><rect x="1555" y="752" width="48" height="48" rx="7" fill="#151a26"/><rect x="1607" y="752" width="48" height="48" rx="7" fill="#151a26"/><rect x="1659" y="752" width="48" height="48" rx="7" fill="#151a26"/><rect x="1711" y="752" width="48" height="48" rx="7" fill="#151a26"/><rect x="1763" y="752" width="48" height="48" rx="7" fill="#151a26"/><rect x="1815" y="752" width="48" height="48" rx="7" fill="#151a26"/><rect x="1867" y="752" width="48" height="48" rx="7" fill="#151a26"/><rect x="1919" y="752" width="48" height="48" rx="7" fill="#151a26"/><rect x="933" y="754" width="200" height="44" rx="6" fill="#12457b" stroke="#1171cb" stroke-width="4"/><rect x="979" y="756" width="4" height="40" fill="#ffffff" opacity="0.017"/><rect x="980" y="756" width="2" height="40" fill="#ffffff" opacity="0.017"/><rect x="1031" y="756" width="4" height="40" fill="#ffffff" opacity="0.017"/><rect x="1032" y="756" width="2" height="40" fill="#ffffff" opacity="0.017"/><rect x="1083" y="756" width="4" height="40" fill="#ffffff" opacity="0.017"/><rect x="1084" y="756" width="2" height="40" fill="#ffffff" opacity="0.017"/><rect x="1141" y="754" width="200" height="44" rx="6" fill="#12457b" stroke="#1171cb" stroke-width="4"/><rect x="1187" y="756" width="4" height="40" fill="#ffffff" opacity="0.017"/><rect x="1188" y="756" width="2" height="40" fill="#ffffff" opacity="0.017"/><rect x="1239" y="756" width="4" height="40" fill="#ffffff" opacity="0.017"/><rect x="1240" y="756" width="2" height="40" fill="#ffffff" opacity="0.017"/><rect x="1291" y="756" width="4" height="40" fill="#ffffff" opacity="0.017"/><rect x="1292" y="756" width="2" height="40" fill="#ffffff" opacity="0.017"/><circle cx="1996" cy="776" r="3.4" fill="#726d77"/><circle cx="2006" cy="776" r="3.4" fill="#726d77"/><circle cx="2016" cy="776" r="3.4" fill="#726d77"/><rect x="307" y="808" width="48" height="48" rx="7" fill="#181726"/><rect x="359" y="808" width="48" height="48" rx="7" fill="#181726"/><rect x="411" y="808" width="48" height="48" rx="7" fill="#181726"/><rect x="463" y="808" width="48" height="48" rx="7" fill="#181726"/><rect x="515" y="808" width="48" height="48" rx="7" fill="#181726"/><rect x="567" y="808" width="48" height="48" rx="7" fill="#181726"/><rect x="619" y="808" width="48" height="48" rx="7" fill="#181726"/><rect x="671" y="808" width="48" height="48" rx="7" fill="#181726"/><rect x="723" y="808" width="48" height="48" rx="7" fill="#181726"/><rect x="775" y="808" width="48" height="48" rx="7" fill="#181726"/><rect x="827" y="808" width="48" height="48" rx="7" fill="#181726"/><rect x="879" y="808" width="48" height="48" rx="7" fill="#181726"/><rect x="931" y="808" width="48" height="48" rx="7" fill="#181726"/><rect x="983" y="808" width="48" height="48" rx="7" fill="#181726"/><rect x="1035" y="808" width="48" height="48" rx="7" fill="#181726"/><rect x="1087" y="808" width="48" height="48" rx="7" fill="#181726"/><rect x="1139" y="808" width="48" height="48" rx="7" fill="#181726"/><rect x="1191" y="808" width="48" height="48" rx="7" fill="#181726"/><rect x="1243" y="808" width="48" height="48" rx="7" fill="#181726"/><rect x="1295" y="808" width="48" height="48" rx="7" fill="#181726"/><rect x="1347" y="808" width="48" height="48" rx="7" fill="#181726"/><rect x="1399" y="808" width="48" height="48" rx="7" fill="#181726"/><rect x="1451" y="808" width="48" height="48" rx="7" fill="#181726"/><rect x="1503" y="808" width="48" height="48" rx="7" fill="#181726"/><rect x="1555" y="808" width="48" height="48" rx="7" fill="#181726"/><rect x="1607" y="808" width="48" height="48" rx="7" fill="#181726"/><rect x="1659" y="808" width="48" height="48" rx="7" fill="#181726"/><rect x="1711" y="808" width="48" height="48" rx="7" fill="#181726"/><rect x="1763" y="808" width="48" height="48" rx="7" fill="#181726"/><rect x="1815" y="808" width="48" height="48" rx="7" fill="#181726"/><rect x="1867" y="808" width="48" height="48" rx="7" fill="#181726"/><rect x="1919" y="808" width="48" height="48" rx="7" fill="#181726"/><circle cx="1996" cy="832" r="3.4" fill="#726d77"/><circle cx="2006" cy="832" r="3.4" fill="#726d77"/><circle cx="2016" cy="832" r="3.4" fill="#726d77"/><rect x="307" y="864" width="48" height="48" rx="7" fill="#1c1627"/><rect x="359" y="864" width="48" height="48" rx="7" fill="#1c1627"/><rect x="411" y="864" width="48" height="48" rx="7" fill="#1c1627"/><rect x="463" y="864" width="48" height="48" rx="7" fill="#1c1627"/><rect x="515" y="864" width="48" height="48" rx="7" fill="#1c1627"/><rect x="567" y="864" width="48" height="48" rx="7" fill="#1c1627"/><rect x="619" y="864" width="48" height="48" rx="7" fill="#1c1627"/><rect x="671" y="864" width="48" height="48" rx="7" fill="#1c1627"/><rect x="723" y="864" width="48" height="48" rx="7" fill="#1c1627"/><rect x="775" y="864" width="48" height="48" rx="7" fill="#1c1627"/><rect x="827" y="864" width="48" height="48" rx="7" fill="#1c1627"/><rect x="879" y="864" width="48" height="48" rx="7" fill="#1c1627"/><rect x="931" y="864" width="48" height="48" rx="7" fill="#1c1627"/><rect x="983" y="864" width="48" height="48" rx="7" fill="#1c1627"/><rect x="1035" y="864" width="48" height="48" rx="7" fill="#1c1627"/><rect x="1087" y="864" width="48" height="48" rx="7" fill="#1c1627"/><rect x="1139" y="864" width="48" height="48" rx="7" fill="#1c1627"/><rect x="1191" y="864" width="48" height="48" rx="7" fill="#1c1627"/><rect x="1243" y="864" width="48" height="48" rx="7" fill="#1c1627"/><rect x="1295" y="864" width="48" height="48" rx="7" fill="#1c1627"/><rect x="1347" y="864" width="48" height="48" rx="7" fill="#1c1627"/><rect x="1399" y="864" width="48" height="48" rx="7" fill="#1c1627"/><rect x="1451" y="864" width="48" height="48" rx="7" fill="#1c1627"/><rect x="1503" y="864" width="48" height="48" rx="7" fill="#1c1627"/><rect x="1555" y="864" width="48" height="48" rx="7" fill="#1c1627"/><rect x="1607" y="864" width="48" height="48" rx="7" fill="#1c1627"/><rect x="1659" y="864" width="48" height="48" rx="7" fill="#1c1627"/><rect x="1711" y="864" width="48" height="48" rx="7" fill="#1c1627"/><rect x="1763" y="864" width="48" height="48" rx="7" fill="#1c1627"/><rect x="1815" y="864" width="48" height="48" rx="7" fill="#1c1627"/><rect x="1867" y="864" width="48" height="48" rx="7" fill="#1c1627"/><rect x="1919" y="864" width="48" height="48" rx="7" fill="#1c1627"/><circle cx="1996" cy="888" r="3.4" fill="#726d77"/><circle cx="2006" cy="888" r="3.4" fill="#726d77"/><circle cx="2016" cy="888" r="3.4" fill="#726d77"/><rect x="307" y="920" width="48" height="48" rx="7" fill="#1e1626"/><rect x="359" y="920" width="48" height="48" rx="7" fill="#1e1626"/><rect x="411" y="920" width="48" height="48" rx="7" fill="#1e1626"/><rect x="463" y="920" width="48" height="48" rx="7" fill="#1e1626"/><rect x="515" y="920" width="48" height="48" rx="7" fill="#1e1626"/><rect x="567" y="920" width="48" height="48" rx="7" fill="#1e1626"/><rect x="619" y="920" width="48" height="48" rx="7" fill="#1e1626"/><rect x="671" y="920" width="48" height="48" rx="7" fill="#1e1626"/><rect x="723" y="920" width="48" height="48" rx="7" fill="#1e1626"/><rect x="775" y="920" width="48" height="48" rx="7" fill="#1e1626"/><rect x="827" y="920" width="48" height="48" rx="7" fill="#1e1626"/><rect x="879" y="920" width="48" height="48" rx="7" fill="#1e1626"/><rect x="931" y="920" width="48" height="48" rx="7" fill="#1e1626"/><rect x="983" y="920" width="48" height="48" rx="7" fill="#1e1626"/><rect x="1035" y="920" width="48" height="48" rx="7" fill="#1e1626"/><rect x="1087" y="920" width="48" height="48" rx="7" fill="#1e1626"/><rect x="1139" y="920" width="48" height="48" rx="7" fill="#1e1626"/><rect x="1191" y="920" width="48" height="48" rx="7" fill="#1e1626"/><rect x="1243" y="920" width="48" height="48" rx="7" fill="#1e1626"/><rect x="1295" y="920" width="48" height="48" rx="7" fill="#1e1626"/><rect x="1347" y="920" width="48" height="48" rx="7" fill="#1e1626"/><rect x="1399" y="920" width="48" height="48" rx="7" fill="#1e1626"/><rect x="1451" y="920" width="48" height="48" rx="7" fill="#1e1626"/><rect x="1503" y="920" width="48" height="48" rx="7" fill="#1e1626"/><rect x="1557" y="922" width="408" height="44" rx="6" fill="#53337f" stroke="#8c50d8" stroke-width="4"/><rect x="1603" y="924" width="4" height="40" fill="#ffffff" opacity="0.017"/><rect x="1604" y="924" width="2" height="40" fill="#ffffff" opacity="0.017"/><rect x="1655" y="924" width="4" height="40" fill="#ffffff" opacity="0.017"/><rect x="1656" y="924" width="2" height="40" fill="#ffffff" opacity="0.017"/><rect x="1707" y="924" width="4" height="40" fill="#ffffff" opacity="0.017"/><rect x="1708" y="924" width="2" height="40" fill="#ffffff" opacity="0.017"/><rect x="1759" y="924" width="4" height="40" fill="#ffffff" opacity="0.017"/><rect x="1760" y="924" width="2" height="40" fill="#ffffff" opacity="0.017"/><rect x="1811" y="924" width="4" height="40" fill="#ffffff" opacity="0.017"/><rect x="1812" y="924" width="2" height="40" fill="#ffffff" opacity="0.017"/><rect x="1863" y="924" width="4" height="40" fill="#ffffff" opacity="0.017"/><rect x="1864" y="924" width="2" height="40" fill="#ffffff" opacity="0.017"/><rect x="1915" y="924" width="4" height="40" fill="#ffffff" opacity="0.017"/><rect x="1916" y="924" width="2" height="40" fill="#ffffff" opacity="0.017"/><circle cx="1996" cy="944" r="3.4" fill="#726d77"/><circle cx="2006" cy="944" r="3.4" fill="#726d77"/><circle cx="2016" cy="944" r="3.4" fill="#726d77"/><polygon points="598,48 615,38.5 615,57.5" fill="#615c66"/><polygon points="647,38.5 647,57.5 663.5,48" fill="#615c66"/><rect x="695" y="36" width="24" height="24" rx="5" fill="#615c66"/><rect x="701.5" y="50" width="11.5" height="10" fill="#48434c"/><g fill="none" stroke="#efe6f5" stroke-width="4.4" stroke-linejoin="miter"><path d="M40.5 17 V31 L58 48 L46 59.5"/><path d="M36.5 36.5 L24.5 48 L40.5 64.5 V79"/></g><polygon points="37.5,16 43.5,16 43.5,21.8" fill="#221e25"/><polygon points="37.5,80 37.5,74.2 43.5,80" fill="#221e25"/><polygon points="41,41 47.5,47.5 41,54 34.5,47.5" fill="#f0405a"/><path d="M807 24 H843  V68 a4 4 0 0 1 -4 4 H807 a8 8 0 0 1 -8 -8 V32 a8 8 0 0 1 8 -8 Z" fill="#827c88"/><path d="M847 24 H891  V68 a4 4 0 0 1 -4 4 H851 a4 4 0 0 1 -4 -4 V24  Z" fill="#373239"/><path d="M895 24 H939  V68 a4 4 0 0 1 -4 4 H899 a4 4 0 0 1 -4 -4 V24  Z" fill="#373239"/><path d="M943 24 H987  V68 a4 4 0 0 1 -4 4 H947 a4 4 0 0 1 -4 -4 V24  Z" fill="#373239"/><path d="M991 24 H1035  V68 a4 4 0 0 1 -4 4 H995 a4 4 0 0 1 -4 -4 V24  Z" fill="#373239"/><path d="M1039 24 H1083  V68 a4 4 0 0 1 -4 4 H1043 a4 4 0 0 1 -4 -4 V24  Z" fill="#373239"/><path d="M1087 24 H1123 a8 8 0 0 1 8 8 V64 a8 8 0 0 1 -8 8 H1091 a4 4 0 0 1 -4 -4 V24  Z" fill="#373239"/><path d="M799 67 H843 V68 a4 4 0 0 1 -4 4 H807 a8 8 0 0 1 -8 -5 Z" fill="#e2d6ec"/><path d="M823 24 H867 V44 a8 8 0 0 1 -8 8 H831 a8 8 0 0 1 -8 -8 Z" fill="#221e25"/><path d="M827 24 H863 V43 a5 5 0 0 1 -5 5 H832 a5 5 0 0 1 -5 -5 Z" fill="#2c2830"/><path d="M871 24 H915 V44 a8 8 0 0 1 -8 8 H879 a8 8 0 0 1 -8 -8 Z" fill="#221e25"/><path d="M875 24 H911 V43 a5 5 0 0 1 -5 5 H880 a5 5 0 0 1 -5 -5 Z" fill="#2c2830"/><path d="M967 24 H1011 V44 a8 8 0 0 1 -8 8 H975 a8 8 0 0 1 -8 -8 Z" fill="#221e25"/><path d="M971 24 H1007 V43 a5 5 0 0 1 -5 5 H976 a5 5 0 0 1 -5 -5 Z" fill="#2c2830"/><path d="M1015 24 H1059 V44 a8 8 0 0 1 -8 8 H1023 a8 8 0 0 1 -8 -8 Z" fill="#221e25"/><path d="M1019 24 H1055 V43 a5 5 0 0 1 -5 5 H1024 a5 5 0 0 1 -5 -5 Z" fill="#2c2830"/><path d="M1063 24 H1107 V44 a8 8 0 0 1 -8 8 H1071 a8 8 0 0 1 -8 -8 Z" fill="#221e25"/><path d="M1067 24 H1103 V43 a5 5 0 0 1 -5 5 H1072 a5 5 0 0 1 -5 -5 Z" fill="#2c2830"/><g fill="none" stroke="#615c66" stroke-width="4.2" stroke-linecap="round"><path d="M1695.5 52.5 C1690 42 1679 41.5 1672 49.5"/><path d="M1730.500 52.5 C1736 42 1747 41.5 1754 49.5"/></g><polygon points="1665,42 1665,54.5 1677.5,54.5" fill="#615c66"/><polygon points="1761,42 1761,54.5 1748.5,54.5" fill="#615c66"/><path d="M2007.0 31.6 L2007.8 31.6 L2008.6 31.7 L2009.3 32.3 L2009.9 33.4 L2010.4 34.5 L2010.8 35.5 L2011.3 35.9 L2011.9 36.2 L2012.5 36.4 L2013.1 36.5 L2014.1 36.1 L2015.3 35.6 L2016.5 35.3 L2017.4 35.3 L2018.0 35.8 L2018.6 36.4 L2019.2 37.0 L2019.7 37.6 L2019.7 38.5 L2019.4 39.7 L2018.9 40.9 L2018.5 41.9 L2018.6 42.5 L2018.8 43.1 L2019.1 43.7 L2019.5 44.2 L2020.5 44.6 L2021.6 45.1 L2022.7 45.7 L2023.3 46.4 L2023.4 47.2 L2023.4 48.0 L2023.4 48.8 L2023.3 49.6 L2022.7 50.3 L2021.6 50.9 L2020.5 51.4 L2019.5 51.8 L2019.1 52.3 L2018.8 52.9 L2018.6 53.5 L2018.5 54.1 L2018.9 55.1 L2019.4 56.3 L2019.7 57.5 L2019.7 58.4 L2019.2 59.0 L2018.6 59.6 L2018.0 60.2 L2017.4 60.7 L2016.5 60.7 L2015.3 60.4 L2014.1 59.9 L2013.1 59.5 L2012.5 59.6 L2011.9 59.8 L2011.3 60.1 L2010.8 60.5 L2010.4 61.5 L2009.9 62.6 L2009.3 63.7 L2008.6 64.3 L2007.8 64.4 L2007.0 64.4 L2006.2 64.4 L2005.4 64.3 L2004.7 63.7 L2004.1 62.6 L2003.6 61.5 L2003.2 60.5 L2002.7 60.1 L2002.1 59.8 L2001.5 59.6 L2000.9 59.5 L1999.9 59.9 L1998.7 60.4 L1997.5 60.7 L1996.6 60.7 L1996.0 60.2 L1995.4 59.6 L1994.8 59.0 L1994.3 58.4 L1994.3 57.5 L1994.6 56.3 L1995.1 55.1 L1995.5 54.1 L1995.4 53.5 L1995.2 52.9 L1994.9 52.3 L1994.5 51.8 L1993.5 51.4 L1992.4 50.9 L1991.3 50.3 L1990.7 49.6 L1990.6 48.8 L1990.6 48.0 L1990.6 47.2 L1990.7 46.4 L1991.3 45.7 L1992.4 45.1 L1993.5 44.6 L1994.5 44.2 L1994.9 43.7 L1995.2 43.1 L1995.4 42.5 L1995.5 41.9 L1995.1 40.9 L1994.6 39.7 L1994.3 38.5 L1994.3 37.6 L1994.8 37.0 L1995.4 36.4 L1996.0 35.8 L1996.6 35.3 L1997.5 35.3 L1998.7 35.6 L1999.9 36.1 L2000.9 36.5 L2001.5 36.4 L2002.1 36.2 L2002.7 35.9 L2003.2 35.5 L2003.6 34.5 L2004.1 33.4 L2004.7 32.3 L2005.4 31.7 L2006.2 31.6 L2007.0 31.6 ZM2012.8 48 a5.8 5.8 0 1 0 -11.6 0 a5.8 5.8 0 1 0 11.6 0 Z" fill="#615c66" fill-rule="evenodd"/><path d="M1991.5 158 L2007 143" stroke="#615c66" stroke-width="3.6" stroke-linecap="round"/><polygon points="2006.3,129.3 2012.0,133.8 2019.2,132.5 2016.7,139.4 2020.1,145.8 2012.8,145.5 2007.8,150.8 2005.8,143.8 1999.2,140.6 2005.2,136.5" fill="#615c66" stroke="#615c66" stroke-width="2.6" stroke-linejoin="round"/><polygon points="51,133 51,156.5 71.5,144.5" fill="#5d5862"/><rect x="723" y="992" width="48" height="188" rx="7" fill="#1b171e"/><rect x="775" y="992" width="48" height="188" rx="7" fill="#1b171e"/><rect x="827" y="992" width="48" height="188" rx="7" fill="#1b171e"/><rect x="879" y="992" width="48" height="188" rx="7" fill="#1b171e"/><rect x="307" y="992" width="48" height="188" rx="7" fill="#19363a"/><rect x="359" y="992" width="48" height="188" rx="7" fill="#19363a"/><rect x="411" y="992" width="48" height="188" rx="7" fill="#19363a"/><rect x="463" y="992" width="48" height="188" rx="7" fill="#19363a"/><rect x="515" y="992" width="48" height="188" rx="7" fill="#19363a"/><rect x="567" y="992" width="48" height="188" rx="7" fill="#19363a"/><rect x="619" y="992" width="48" height="188" rx="7" fill="#19363a"/><rect x="671" y="992" width="48" height="188" rx="7" fill="#19363a"/><rect x="931" y="992" width="48" height="188" rx="7" fill="#19363a"/><rect x="983" y="992" width="48" height="188" rx="7" fill="#19363a"/><rect x="1035" y="992" width="48" height="188" rx="7" fill="#19363a"/><rect x="1087" y="992" width="48" height="188" rx="7" fill="#19363a"/><rect x="1139" y="992" width="48" height="188" rx="7" fill="#19363a"/><rect x="1191" y="992" width="48" height="188" rx="7" fill="#19363a"/><rect x="1243" y="992" width="48" height="188" rx="7" fill="#19363a"/><rect x="1295" y="992" width="48" height="188" rx="7" fill="#19363a"/><rect x="1347" y="992" width="48" height="188" rx="7" fill="#19363a"/><rect x="1399" y="992" width="48" height="188" rx="7" fill="#19363a"/><rect x="1451" y="992" width="48" height="188" rx="7" fill="#19363a"/><rect x="1503" y="992" width="48" height="188" rx="7" fill="#19363a"/><rect x="1555" y="992" width="48" height="188" rx="7" fill="#19363a"/><rect x="1607" y="992" width="48" height="188" rx="7" fill="#19363a"/><rect x="1659" y="992" width="48" height="188" rx="7" fill="#19363a"/><rect x="1711" y="992" width="48" height="188" rx="7" fill="#19363a"/><rect x="1763" y="992" width="48" height="188" rx="7" fill="#19363a"/><rect x="1815" y="992" width="48" height="188" rx="7" fill="#19363a"/><rect x="1867" y="992" width="48" height="188" rx="7" fill="#19363a"/><rect x="1919" y="992" width="48" height="188" rx="7" fill="#19363a"/><defs><clipPath id="lb0"><rect x="307" y="992" width="412" height="188" rx="7"/></clipPath><clipPath id="lb1"><rect x="931" y="992" width="412" height="188" rx="7"/></clipPath><clipPath id="lb2"><rect x="1347" y="992" width="204" height="188" rx="7"/></clipPath><clipPath id="lb3"><rect x="1555" y="992" width="204" height="188" rx="7"/></clipPath><clipPath id="lb4"><rect x="1763" y="992" width="204" height="188" rx="7"/></clipPath><clipPath id="lc0"><rect x="307" y="992" width="48" height="188" rx="7"/></clipPath><clipPath id="lc1"><rect x="359" y="992" width="48" height="188" rx="7"/></clipPath><clipPath id="lc2"><rect x="411" y="992" width="48" height="188" rx="7"/></clipPath><clipPath id="lc3"><rect x="463" y="992" width="48" height="188" rx="7"/></clipPath><clipPath id="lc4"><rect x="515" y="992" width="48" height="188" rx="7"/></clipPath><clipPath id="lc5"><rect x="567" y="992" width="48" height="188" rx="7"/></clipPath><clipPath id="lc6"><rect x="619" y="992" width="48" height="188" rx="7"/></clipPath><clipPath id="lc7"><rect x="671" y="992" width="48" height="188" rx="7"/></clipPath></defs><rect x="307" y="1023" width="48" height="157" fill="#21b2aa" clip-path="url(#lc0)"/><rect x="359" y="1077" width="48" height="103" fill="#21b2aa" clip-path="url(#lc1)"/><rect x="411" y="1160" width="48" height="20" fill="#21b2aa" clip-path="url(#lc2)"/><rect x="463" y="1094" width="48" height="86" fill="#21b2aa" clip-path="url(#lc3)"/><rect x="515" y="1017" width="48" height="163" fill="#21b2aa" clip-path="url(#lc4)"/><rect x="567" y="1090" width="48" height="90" fill="#21b2aa" clip-path="url(#lc5)"/><rect x="619" y="1013" width="48" height="167" fill="#21b2aa" clip-path="url(#lc6)"/><rect x="671" y="1178.5" width="48" height="1.5" fill="#21b2aa" clip-path="url(#lc7)"/><path d="M931 1180 L931 1053.5 L980.5 1170 L1032 1136 L1085 1133.5 L1137 1074.3 L1189 1111 L1241 1065 L1293 1095.6 L1343 1017 L1343 1180 Z" fill="#21b2aa" clip-path="url(#lb1)"/><rect x="931" y="992" width="412" height="10" fill="#19363a" clip-path="url(#lb1)"/><rect x="979" y="994" width="4" height="184" fill="#28303a"/><rect x="979.5" y="994" width="3" height="184" fill="#262230"/><rect x="1031" y="994" width="4" height="184" fill="#28303a"/><rect x="1031.5" y="994" width="3" height="184" fill="#262230"/><rect x="1083" y="994" width="4" height="184" fill="#28303a"/><rect x="1083.5" y="994" width="3" height="184" fill="#262230"/><rect x="1135" y="994" width="4" height="184" fill="#28303a"/><rect x="1135.5" y="994" width="3" height="184" fill="#262230"/><rect x="1187" y="994" width="4" height="184" fill="#28303a"/><rect x="1187.5" y="994" width="3" height="184" fill="#262230"/><rect x="1239" y="994" width="4" height="184" fill="#28303a"/><rect x="1239.5" y="994" width="3" height="184" fill="#262230"/><rect x="1291" y="994" width="4" height="184" fill="#28303a"/><rect x="1291.5" y="994" width="3" height="184" fill="#262230"/><rect x="933" y="994" width="408" height="184" rx="6" fill="none" stroke="#eef6f8" stroke-width="4"/><path d="M1347 1180 L1347.0 1023.9 L1348.0 1025.6 L1349.0 1027.2 L1350.0 1028.9 L1351.0 1030.5 L1352.0 1032.2 L1353.0 1033.8 L1354.0 1035.4 L1355.0 1037.0 L1356.0 1038.5 L1357.0 1040.1 L1358.0 1041.6 L1359.0 1043.2 L1360.0 1044.7 L1361.0 1046.2 L1362.0 1047.7 L1363.0 1049.2 L1364.0 1050.6 L1365.0 1052.1 L1366.0 1053.5 L1367.0 1054.9 L1368.0 1056.3 L1369.0 1057.7 L1370.0 1059.1 L1371.0 1060.5 L1372.0 1061.8 L1373.0 1063.2 L1374.0 1064.5 L1375.0 1065.8 L1376.0 1067.2 L1377.0 1068.5 L1378.0 1069.7 L1379.0 1071.0 L1380.0 1072.3 L1381.0 1073.5 L1382.0 1074.7 L1383.0 1076.0 L1384.0 1077.2 L1385.0 1078.4 L1386.0 1079.5 L1387.0 1080.7 L1388.0 1081.9 L1389.0 1083.0 L1390.0 1084.2 L1391.0 1085.3 L1392.0 1086.4 L1393.0 1087.5 L1394.0 1088.6 L1395.0 1089.7 L1396.0 1090.7 L1397.0 1091.8 L1398.0 1092.8 L1399.0 1093.8 L1400.0 1094.9 L1401.0 1095.9 L1402.0 1096.9 L1403.0 1097.9 L1404.0 1098.8 L1405.0 1099.8 L1406.0 1100.7 L1407.0 1101.7 L1408.0 1102.6 L1409.0 1103.5 L1410.0 1104.4 L1411.0 1105.3 L1412.0 1106.2 L1413.0 1107.1 L1414.0 1107.9 L1415.0 1108.8 L1416.0 1109.6 L1417.0 1110.5 L1418.0 1111.3 L1419.0 1112.1 L1420.0 1112.9 L1421.0 1113.7 L1422.0 1114.5 L1423.0 1115.2 L1424.0 1116.0 L1425.0 1116.8 L1426.0 1117.5 L1427.0 1118.2 L1428.0 1118.9 L1429.0 1119.7 L1430.0 1120.4 L1431.0 1121.0 L1432.0 1121.7 L1433.0 1122.4 L1434.0 1123.1 L1435.0 1123.7 L1436.0 1124.4 L1437.0 1125.0 L1438.0 1125.6 L1439.0 1126.2 L1440.0 1126.8 L1441.0 1127.4 L1442.0 1128.0 L1443.0 1128.6 L1444.0 1129.2 L1445.0 1129.7 L1446.0 1130.3 L1447.0 1130.8 L1448.0 1131.3 L1449.0 1131.9 L1450.0 1132.4 L1451.0 1132.9 L1452.0 1133.4 L1453.0 1133.9 L1454.0 1134.4 L1455.0 1134.8 L1456.0 1135.3 L1457.0 1135.7 L1458.0 1136.2 L1459.0 1136.6 L1460.0 1137.1 L1461.0 1137.5 L1462.0 1137.9 L1463.0 1138.3 L1464.0 1138.7 L1465.0 1139.1 L1466.0 1139.5 L1467.0 1139.9 L1468.0 1140.2 L1469.0 1140.6 L1470.0 1141.0 L1471.0 1141.3 L1472.0 1141.6 L1473.0 1142.0 L1474.0 1142.3 L1475.0 1142.6 L1476.0 1142.9 L1477.0 1143.2 L1478.0 1143.5 L1479.0 1143.8 L1480.0 1144.1 L1481.0 1144.4 L1482.0 1144.7 L1483.0 1144.9 L1484.0 1145.2 L1485.0 1145.4 L1486.0 1145.7 L1487.0 1145.9 L1488.0 1146.2 L1489.0 1146.4 L1490.0 1146.6 L1491.0 1146.8 L1492.0 1147.0 L1493.0 1147.2 L1494.0 1147.4 L1495.0 1147.6 L1496.0 1147.8 L1497.0 1148.0 L1498.0 1148.1 L1499.0 1148.3 L1500.0 1148.5 L1501.0 1148.6 L1502.0 1148.8 L1503.0 1148.9 L1504.0 1149.1 L1505.0 1149.2 L1506.0 1149.3 L1507.0 1149.5 L1508.0 1149.6 L1509.0 1149.7 L1510.0 1149.8 L1511.0 1149.9 L1512.0 1150.0 L1513.0 1150.1 L1514.0 1150.2 L1515.0 1150.3 L1516.0 1150.4 L1517.0 1150.5 L1518.0 1150.6 L1519.0 1150.6 L1520.0 1150.7 L1521.0 1150.8 L1522.0 1150.8 L1523.0 1150.9 L1524.0 1151.0 L1525.0 1151.0 L1526.0 1151.1 L1527.0 1151.1 L1528.0 1151.1 L1529.0 1151.2 L1530.0 1151.2 L1531.0 1151.3 L1532.0 1151.3 L1533.0 1151.3 L1534.0 1151.3 L1535.0 1151.4 L1536.0 1151.4 L1537.0 1151.4 L1538.0 1151.4 L1539.0 1151.4 L1540.0 1151.5 L1541.0 1151.5 L1542.0 1151.5 L1543.0 1151.5 L1544.0 1151.5 L1545.0 1151.5 L1546.0 1151.5 L1547.0 1151.5 L1548.0 1151.5 L1549.0 1151.5 L1550.0 1151.5 L1551.0 1151.5 L1551 1180 Z" fill="#21b2aa" clip-path="url(#lb2)"/><path d="M1555 1180 L1555.0 1147.5 L1556.0 1146.8 L1557.0 1145.8 L1558.0 1144.3 L1559.0 1142.4 L1560.0 1140.2 L1561.0 1137.5 L1562.0 1134.5 L1563.0 1131.2 L1564.0 1127.5 L1565.0 1123.6 L1566.0 1119.4 L1567.0 1114.9 L1568.0 1110.3 L1569.0 1105.5 L1570.0 1100.5 L1571.0 1095.4 L1572.0 1090.3 L1573.0 1085.2 L1574.0 1080.0 L1575.0 1074.9 L1576.0 1069.8 L1577.0 1064.8 L1578.0 1060.0 L1579.0 1055.4 L1580.0 1050.9 L1581.0 1046.7 L1582.0 1042.8 L1583.0 1039.1 L1584.0 1035.8 L1585.0 1032.8 L1586.0 1030.1 L1587.0 1027.9 L1588.0 1026.0 L1589.0 1024.5 L1590.0 1023.5 L1591.0 1022.8 L1592.0 1022.6 L1593.0 1022.8 L1594.0 1023.5 L1595.0 1024.5 L1596.0 1026.0 L1597.0 1027.9 L1598.0 1030.1 L1599.0 1032.8 L1600.0 1035.8 L1601.0 1039.1 L1602.0 1042.8 L1603.0 1046.7 L1604.0 1050.9 L1605.0 1055.4 L1606.0 1060.0 L1607.0 1064.8 L1608.0 1069.8 L1609.0 1074.9 L1610.0 1080.0 L1611.0 1085.2 L1612.0 1090.3 L1613.0 1095.4 L1614.0 1100.5 L1615.0 1105.5 L1616.0 1110.3 L1617.0 1114.9 L1618.0 1119.4 L1619.0 1123.6 L1620.0 1127.5 L1621.0 1131.2 L1622.0 1134.5 L1623.0 1137.5 L1624.0 1140.2 L1625.0 1142.4 L1626.0 1144.3 L1627.0 1145.8 L1628.0 1146.8 L1629.0 1147.5 L1630.0 1147.7 L1631.0 1147.5 L1632.0 1146.8 L1633.0 1145.8 L1634.0 1144.3 L1635.0 1142.4 L1636.0 1140.2 L1637.0 1137.5 L1638.0 1134.5 L1639.0 1131.2 L1640.0 1127.5 L1641.0 1123.6 L1642.0 1119.4 L1643.0 1114.9 L1644.0 1110.3 L1645.0 1105.5 L1646.0 1100.5 L1647.0 1095.4 L1648.0 1090.3 L1649.0 1085.2 L1650.0 1080.0 L1651.0 1074.9 L1652.0 1069.8 L1653.0 1064.8 L1654.0 1060.0 L1655.0 1055.4 L1656.0 1050.9 L1657.0 1046.7 L1658.0 1042.8 L1659.0 1039.1 L1660.0 1035.8 L1661.0 1032.8 L1662.0 1030.1 L1663.0 1027.9 L1664.0 1026.0 L1665.0 1024.5 L1666.0 1023.5 L1667.0 1022.8 L1668.0 1022.6 L1669.0 1022.8 L1670.0 1023.5 L1671.0 1024.5 L1672.0 1026.0 L1673.0 1027.9 L1674.0 1030.1 L1675.0 1032.8 L1676.0 1035.8 L1677.0 1039.1 L1678.0 1042.8 L1679.0 1046.7 L1680.0 1050.9 L1681.0 1055.4 L1682.0 1060.0 L1683.0 1064.8 L1684.0 1069.8 L1685.0 1074.9 L1686.0 1080.0 L1687.0 1085.2 L1688.0 1090.3 L1689.0 1095.4 L1690.0 1100.5 L1691.0 1105.5 L1692.0 1110.3 L1693.0 1114.9 L1694.0 1119.4 L1695.0 1123.6 L1696.0 1127.5 L1697.0 1131.2 L1698.0 1134.5 L1699.0 1137.5 L1700.0 1140.2 L1701.0 1142.4 L1702.0 1144.3 L1703.0 1145.8 L1704.0 1146.8 L1705.0 1147.5 L1706.0 1147.7 L1707.0 1147.5 L1708.0 1146.8 L1709.0 1145.8 L1710.0 1144.3 L1711.0 1142.4 L1712.0 1140.2 L1713.0 1137.5 L1714.0 1134.5 L1715.0 1131.2 L1716.0 1127.5 L1717.0 1123.6 L1718.0 1119.4 L1719.0 1114.9 L1720.0 1110.3 L1721.0 1105.5 L1722.0 1100.5 L1723.0 1095.4 L1724.0 1090.3 L1725.0 1085.2 L1726.0 1080.0 L1727.0 1074.9 L1728.0 1069.8 L1729.0 1064.8 L1730.0 1060.0 L1731.0 1055.4 L1732.0 1050.9 L1733.0 1046.7 L1734.0 1042.8 L1735.0 1039.1 L1736.0 1035.8 L1737.0 1032.8 L1738.0 1030.1 L1739.0 1027.9 L1740.0 1026.0 L1741.0 1024.5 L1742.0 1023.5 L1743.0 1022.8 L1744.0 1022.6 L1745.0 1022.8 L1746.0 1023.5 L1747.0 1024.5 L1748.0 1026.0 L1749.0 1027.9 L1750.0 1030.1 L1751.0 1032.8 L1752.0 1035.8 L1753.0 1039.1 L1754.0 1042.8 L1755.0 1046.7 L1756.0 1050.9 L1757.0 1055.4 L1758.0 1060.0 L1759.0 1064.8 L1759 1180 Z" fill="#21b2aa" clip-path="url(#lb3)"/><path d="M1763 1180 L1763.0 1000.4 L1763.5 1000.4 L1764.0 1004.6 L1764.5 1011.5 L1765.0 1018.2 L1765.5 1024.7 L1766.0 1031.1 L1766.5 1037.3 L1767.0 1043.3 L1767.5 1049.2 L1768.0 1054.9 L1768.5 1060.4 L1769.0 1065.8 L1769.5 1071.0 L1770.0 1076.1 L1770.5 1081.0 L1771.0 1085.8 L1771.5 1090.4 L1772.0 1094.8 L1772.5 1099.2 L1773.0 1103.3 L1773.5 1107.4 L1774.0 1111.3 L1774.5 1115.0 L1775.0 1118.7 L1775.5 1122.2 L1776.0 1125.5 L1776.5 1128.8 L1777.0 1131.9 L1777.5 1134.8 L1778.0 1137.7 L1778.5 1140.4 L1779.0 1143.0 L1779.5 1145.5 L1780.0 1147.9 L1780.5 1150.2 L1781.0 1152.4 L1781.5 1154.4 L1782.0 1156.4 L1782.5 1158.2 L1783.0 1160.0 L1783.5 1161.6 L1784.0 1163.2 L1784.5 1164.7 L1785.0 1166.0 L1785.5 1167.3 L1786.0 1168.5 L1786.5 1169.6 L1787.0 1170.6 L1787.5 1171.6 L1788.0 1172.5 L1788.5 1173.3 L1789.0 1174.0 L1789.5 1174.7 L1790.0 1175.3 L1790.5 1175.8 L1791.0 1176.3 L1791.5 1176.7 L1792.0 1177.1 L1792.5 1177.4 L1793.0 1177.6 L1793.5 1177.9 L1794.0 1178.1 L1794.5 1178.2 L1795.0 1178.3 L1795.5 1178.4 L1796.0 1178.4 L1796.5 1178.5 L1797.0 1178.5 L1797.5 1178.5 L1798.0 1178.5 L1798.5 1178.5 L1799.0 1178.5 L1799.5 1178.5 L1800.0 1178.5 L1800.5 1178.5 L1801.0 1178.5 L1801.5 1178.5 L1802.0 1178.5 L1802.5 1178.5 L1803.0 1178.5 L1803.5 1178.5 L1804.0 1178.5 L1804.5 1178.5 L1805.0 1178.5 L1805.5 1178.5 L1806.0 1178.5 L1806.5 1178.5 L1807.0 1178.5 L1807.5 1178.5 L1808.0 1178.5 L1808.5 1178.5 L1809.0 1178.5 L1809.5 1178.5 L1810.0 1178.5 L1810.5 1178.5 L1811.0 1178.5 L1811.5 1178.5 L1812.0 1118.7 L1812.5 1118.7 L1813.0 1118.7 L1813.5 1118.7 L1814.0 1118.7 L1814.5 1118.7 L1815.0 1118.7 L1815.5 1118.7 L1816.0 1121.6 L1816.5 1124.5 L1817.0 1127.3 L1817.5 1129.9 L1818.0 1132.5 L1818.5 1135.0 L1819.0 1137.4 L1819.5 1139.7 L1820.0 1141.9 L1820.5 1144.1 L1821.0 1146.2 L1821.5 1148.2 L1822.0 1150.1 L1822.5 1151.9 L1823.0 1153.7 L1823.5 1155.3 L1824.0 1157.0 L1824.5 1158.5 L1825.0 1160.0 L1825.5 1161.4 L1826.0 1162.7 L1826.5 1163.9 L1827.0 1165.1 L1827.5 1166.3 L1828.0 1167.3 L1828.5 1168.3 L1829.0 1169.3 L1829.5 1170.2 L1830.0 1171.0 L1830.5 1171.8 L1831.0 1172.5 L1831.5 1173.2 L1832.0 1173.8 L1832.5 1174.4 L1833.0 1174.9 L1833.5 1175.4 L1834.0 1175.9 L1834.5 1176.3 L1835.0 1176.6 L1835.5 1176.9 L1836.0 1177.2 L1836.5 1177.5 L1837.0 1177.7 L1837.5 1177.9 L1838.0 1178.0 L1838.5 1178.2 L1839.0 1178.3 L1839.5 1178.3 L1840.0 1178.4 L1840.5 1178.4 L1841.0 1178.5 L1841.5 1178.5 L1842.0 1178.5 L1842.5 1178.5 L1843.0 1178.5 L1843.5 1178.5 L1844.0 1178.5 L1844.5 1178.5 L1845.0 1178.5 L1845.5 1178.5 L1846.0 1178.5 L1846.5 1178.5 L1847.0 1178.5 L1847.5 1178.5 L1848.0 1178.5 L1848.5 1178.5 L1849.0 1178.5 L1849.5 1178.5 L1850.0 1178.5 L1850.5 1178.5 L1851.0 1178.5 L1851.5 1178.5 L1852.0 1178.5 L1852.5 1178.5 L1853.0 1178.5 L1853.5 1178.5 L1854.0 1178.5 L1854.5 1178.5 L1855.0 1178.5 L1855.5 1178.5 L1856.0 1178.5 L1856.5 1178.5 L1857.0 1178.5 L1857.5 1178.5 L1858.0 1178.5 L1858.5 1178.5 L1859.0 1178.5 L1859.5 1178.5 L1860.0 1178.5 L1860.5 1178.5 L1861.0 1178.5 L1861.5 1178.5 L1862.0 1178.5 L1862.5 1178.5 L1863.0 1178.5 L1863.5 1178.5 L1864.0 1178.5 L1864.5 1021.0 L1865.0 1021.0 L1865.5 1021.0 L1866.0 1021.0 L1866.5 1024.0 L1867.0 1038.6 L1867.5 1052.2 L1868.0 1065.0 L1868.5 1076.9 L1869.0 1088.1 L1869.5 1098.4 L1870.0 1107.9 L1870.5 1116.7 L1871.0 1124.8 L1871.5 1132.1 L1872.0 1138.8 L1872.5 1144.9 L1873.0 1150.3 L1873.5 1155.2 L1874.0 1159.5 L1874.5 1163.2 L1875.0 1166.5 L1875.5 1169.2 L1876.0 1171.6 L1876.5 1173.5 L1877.0 1175.1 L1877.5 1176.3 L1878.0 1177.2 L1878.5 1177.8 L1879.0 1178.2 L1879.5 1178.4 L1880.0 1178.5 L1880.5 1178.5 L1881.0 1178.5 L1881.5 1178.5 L1882.0 1021.0 L1882.5 1021.0 L1883.0 1021.0 L1883.5 1021.0 L1884.0 1021.0 L1884.5 1035.7 L1885.0 1049.6 L1885.5 1062.5 L1886.0 1074.6 L1886.5 1085.9 L1887.0 1096.4 L1887.5 1106.1 L1888.0 1115.0 L1888.5 1123.2 L1889.0 1130.7 L1889.5 1137.6 L1890.0 1143.7 L1890.5 1149.3 L1891.0 1154.3 L1891.5 1158.7 L1892.0 1162.5 L1892.5 1165.9 L1893.0 1168.7 L1893.5 1171.1 L1894.0 1173.2 L1894.5 1174.8 L1895.0 1176.0 L1895.5 1177.0 L1896.0 1177.7 L1896.5 1178.1 L1897.0 1178.4 L1897.5 1178.5 L1898.0 1178.5 L1898.5 1178.5 L1899.0 1021.0 L1899.5 1021.0 L1900.0 1021.0 L1900.5 1021.0 L1901.0 1021.0 L1901.5 1029.9 L1902.0 1044.1 L1902.5 1057.4 L1903.0 1069.9 L1903.5 1081.5 L1904.0 1092.3 L1904.5 1102.3 L1905.0 1111.5 L1905.5 1120.0 L1906.0 1127.8 L1906.5 1134.9 L1907.0 1141.3 L1907.5 1147.1 L1908.0 1152.3 L1908.5 1157.0 L1909.0 1161.0 L1909.5 1164.6 L1910.0 1167.6 L1910.5 1170.2 L1911.0 1172.4 L1911.5 1174.2 L1912.0 1175.6 L1912.5 1176.6 L1913.0 1177.4 L1913.5 1178.0 L1914.0 1178.3 L1914.5 1178.5 L1915.0 1178.5 L1915.5 1178.5 L1916.0 1178.5 L1916.5 1041.3 L1917.0 1041.3 L1917.5 1041.3 L1918.0 1041.3 L1918.5 1041.3 L1919.0 1041.3 L1919.5 1041.3 L1920.0 1043.7 L1920.5 1049.5 L1921.0 1055.2 L1921.5 1060.7 L1922.0 1066.0 L1922.5 1071.2 L1923.0 1076.3 L1923.5 1081.2 L1924.0 1085.9 L1924.5 1090.5 L1925.0 1094.9 L1925.5 1099.2 L1926.0 1103.4 L1926.5 1107.4 L1927.0 1111.3 L1927.5 1115.0 L1928.0 1118.6 L1928.5 1122.1 L1929.0 1125.5 L1929.5 1128.7 L1930.0 1131.8 L1930.5 1134.8 L1931.0 1137.6 L1931.5 1140.3 L1932.0 1142.9 L1932.5 1145.4 L1933.0 1147.8 L1933.5 1150.1 L1934.0 1152.3 L1934.5 1154.3 L1935.0 1156.3 L1935.5 1158.1 L1936.0 1159.9 L1936.5 1161.5 L1937.0 1163.1 L1937.5 1164.5 L1938.0 1165.9 L1938.5 1167.2 L1939.0 1168.4 L1939.5 1169.5 L1940.0 1170.5 L1940.5 1171.5 L1941.0 1172.4 L1941.5 1173.2 L1942.0 1173.9 L1942.5 1174.6 L1943.0 1175.2 L1943.5 1175.7 L1944.0 1176.2 L1944.5 1176.6 L1945.0 1177.0 L1945.5 1177.3 L1946.0 1177.6 L1946.5 1177.8 L1947.0 1178.0 L1947.5 1178.2 L1948.0 1178.3 L1948.5 1178.4 L1949.0 1178.4 L1949.5 1178.5 L1950.0 1178.5 L1950.5 1178.5 L1951.0 1178.5 L1951.5 1178.5 L1952.0 1178.5 L1952.5 1178.5 L1953.0 1178.5 L1953.5 1178.5 L1954.0 1178.5 L1954.5 1178.5 L1955.0 1178.5 L1955.5 1178.5 L1956.0 1178.5 L1956.5 1178.5 L1957.0 1178.5 L1957.5 1178.5 L1958.0 1178.5 L1958.5 1178.5 L1959.0 1178.5 L1959.5 1178.5 L1960.0 1178.5 L1960.5 1178.5 L1961.0 1178.5 L1961.5 1178.5 L1962.0 1178.5 L1962.5 1178.5 L1963.0 1178.5 L1963.5 1178.5 L1964.0 1178.5 L1964.5 1178.5 L1965.0 1178.5 L1965.5 1178.5 L1966.0 1178.5 L1966.5 1178.5 L1967.0 1178.5 L1967 1180 Z" fill="#21b2aa" clip-path="url(#lb4)"/><rect x="195" y="992" width="88" height="48" rx="8" fill="#38333d"/><rect x="225" y="1016" width="8" height="13" rx="1.5" fill="#ecdff3"/><rect x="235" y="1009" width="8" height="20" rx="1.5" fill="#ecdff3"/><rect x="245" y="1003" width="8" height="26" rx="1.5" fill="#ecdff3"/><g transform="translate(2007.5,1085.5) rotate(-40)" fill="none" stroke="#8a8490" stroke-width="3.6" stroke-linecap="round"><path d="M-3 -6.5 H-9.5 a6.5 6.5 0 0 0 0 13 H-3"/><path d="M3 -6.5 H9.5 a6.5 6.5 0 0 1 0 13 H3"/><path d="M-6 0 H6"/></g><rect x="0" y="1201.5" width="2046" height="3" fill="#201c25"/><rect x="0" y="1204" width="2046" height="235" fill="#2f2a35"/><rect x="0" y="1204" width="2046" height="3" fill="#37323d"/><rect x="-10" y="1228" width="25" height="188" rx="8" fill="#21b2aa"/><rect x="2031" y="1228" width="30" height="188" rx="8" fill="#21b2aa"/><rect x="53" y="1296" width="350" height="48" rx="8" fill="#433e49"/><polygon points="267,1320 284,1310.5 284,1329.5" fill="#6d6773"/><polygon points="315,1310.5 315,1329.5 331.5,1320" fill="#6d6773"/><rect x="363" y="1308" width="24" height="24" rx="5" fill="#6d6773"/><rect x="369.5" y="1322" width="11.5" height="10" fill="#433e49"/><g fill="none" stroke="#6d6773" stroke-width="4.4" stroke-linecap="round"><path d="M59.5 1384 A13 13 0 1 1 57.3 1399.500"/></g><polygon points="54,1377.5 54,1390.5 67,1390.5" fill="#6d6773"/><rect x="111" y="1377" width="32" height="32" rx="5" fill="#6d6773"/><circle cx="119.8" cy="1385.8" r="2.7" fill="#2f2a35"/><circle cx="134.2" cy="1385.8" r="2.7" fill="#2f2a35"/><circle cx="127" cy="1393" r="2.7" fill="#2f2a35"/><circle cx="119.8" cy="1400.2" r="2.7" fill="#2f2a35"/><circle cx="134.2" cy="1400.2" r="2.7" fill="#2f2a35"/><rect x="776" y="1288" width="3" height="63" rx="1.5" fill="#433e49"/><rect x="950" y="1288" width="3" height="63" rx="1.5" fill="#433e49"/><defs><linearGradient id="kg" x1="0" y1="0" x2="0" y2="1"><stop offset="0" stop-color="#625e64"/><stop offset="0.5" stop-color="#4a464d"/><stop offset="1" stop-color="#39353c"/></linearGradient><linearGradient id="kt" x1="0" y1="0" x2="0" y2="1"><stop offset="0" stop-color="#3cc4bc"/><stop offset="0.5" stop-color="#25b3ab"/><stop offset="1" stop-color="#1ea59e"/></linearGradient><radialGradient id="ks" cx="0.5" cy="0.5" r="0.5"><stop offset="0" stop-color="#000" stop-opacity="0.55"/><stop offset="0.6" stop-color="#000" stop-opacity="0.35"/><stop offset="1" stop-color="#000" stop-opacity="0"/></radialGradient></defs><ellipse cx="557" cy="1338.5" rx="40.5" ry="37.5" fill="url(#ks)"/><path d="M528.01 1350.99 A41 41 0 1 1 585.99 1350.99" fill="none" stroke="#39343e" stroke-width="4.5"/><circle cx="557" cy="1322" r="34" fill="#231f27"/><circle cx="557" cy="1322" r="30" fill="url(#kt)"/><path d="M559.39 1319.44 L573.71 1304.08" stroke="#efe6f5" stroke-width="4.2"/><ellipse cx="689" cy="1338.5" rx="40.5" ry="37.5" fill="url(#ks)"/><path d="M660.01 1350.99 A41 41 0 1 1 717.99 1350.99" fill="none" stroke="#39343e" stroke-width="4.5"/><path d="M660.01 1350.99 A41 41 0 0 1 689.72 1281.01" fill="none" stroke="#21b2aa" stroke-width="4.5"/><circle cx="689" cy="1322" r="34" fill="#231f27"/><circle cx="689" cy="1322" r="30" fill="url(#kg)"/><path d="M688.88 1318.50 L688.14 1297.51" stroke="#efe6f5" stroke-width="4.2"/><ellipse cx="863" cy="1338.5" rx="40.5" ry="37.5" fill="url(#ks)"/><path d="M834.01 1350.99 A41 41 0 1 1 891.99 1350.99" fill="none" stroke="#39343e" stroke-width="4.5"/><circle cx="863" cy="1322" r="34" fill="#231f27"/><circle cx="863" cy="1322" r="30" fill="url(#kg)"/><path d="M860.40 1324.34 L844.79 1338.39" stroke="#efe6f5" stroke-width="4.2"/><ellipse cx="1036.5" cy="1338.5" rx="40.5" ry="37.5" fill="url(#ks)"/><path d="M1007.51 1350.99 A41 41 0 1 1 1065.49 1350.99" fill="none" stroke="#39343e" stroke-width="4.5"/><path d="M1007.51 1350.99 A41 41 0 0 1 1000.30 1302.75" fill="none" stroke="#21b2aa" stroke-width="4.5"/><circle cx="1036.5" cy="1322" r="34" fill="#231f27"/><circle cx="1036.5" cy="1322" r="30" fill="url(#kg)"/><path d="M1033.38 1320.41 L1014.67 1310.88" stroke="#efe6f5" stroke-width="4.2"/><ellipse cx="1168.5" cy="1338.5" rx="40.5" ry="37.5" fill="url(#ks)"/><path d="M1139.51 1350.99 A41 41 0 1 1 1197.49 1350.99" fill="none" stroke="#39343e" stroke-width="4.5"/><path d="M1139.51 1350.99 A41 41 0 1 1 1204.70 1302.75" fill="none" stroke="#21b2aa" stroke-width="4.5"/><circle cx="1168.5" cy="1322" r="34" fill="#231f27"/><circle cx="1168.5" cy="1322" r="30" fill="url(#kg)"/><path d="M1171.53 1320.25 L1189.72 1309.75" stroke="#efe6f5" stroke-width="4.2"/><ellipse cx="1300.5" cy="1338.5" rx="40.5" ry="37.5" fill="url(#ks)"/><path d="M1271.51 1350.99 A41 41 0 1 1 1329.49 1350.99" fill="none" stroke="#39343e" stroke-width="4.5"/><path d="M1271.51 1350.99 A41 41 0 1 1 1340.88 1314.88" fill="none" stroke="#21b2aa" stroke-width="4.5"/><circle cx="1300.5" cy="1322" r="34" fill="#231f27"/><circle cx="1300.5" cy="1322" r="30" fill="url(#kg)"/><path d="M1303.94 1321.33 L1324.55 1317.33" stroke="#efe6f5" stroke-width="4.2"/><ellipse cx="1432.5" cy="1338.5" rx="40.5" ry="37.5" fill="url(#ks)"/><path d="M1403.51 1350.99 A41 41 0 1 1 1461.49 1350.99" fill="none" stroke="#39343e" stroke-width="4.5"/><circle cx="1432.5" cy="1322" r="34" fill="#231f27"/><circle cx="1432.5" cy="1322" r="30" fill="url(#kg)"/><path d="M1432.50 1318.50 L1432.50 1297.50" stroke="#efe6f5" stroke-width="4.2"/><circle cx="1432.5" cy="1280" r="1.8" fill="#efe6f5"/><ellipse cx="1943" cy="1338.5" rx="40.5" ry="37.5" fill="url(#ks)"/><path d="M1914.01 1350.99 A41 41 0 1 1 1971.99 1350.99" fill="none" stroke="#39343e" stroke-width="4.5"/><path d="M1914.01 1350.99 A41 41 0 1 1 1971.99 1350.99" fill="none" stroke="#21b2aa" stroke-width="4.5"/><circle cx="1943" cy="1322" r="34" fill="#231f27"/><circle cx="1943" cy="1322" r="30" fill="url(#kg)"/><path d="M1945.60 1324.34 L1961.21 1338.39" stroke="#efe6f5" stroke-width="4.2"/><ellipse cx="61" cy="1151.275" rx="27.675" ry="25.625" fill="url(#ks)"/><path d="M39.79 1161.21 A30 30 0 1 1 82.21 1161.21" fill="none" stroke="#39343e" stroke-width="4"/><path d="M39.79 1161.21 A30 30 0 1 1 82.21 1161.21" fill="none" stroke="#8a8490" stroke-width="4"/><circle cx="61" cy="1140" r="26" fill="#1e1a22"/><circle cx="61" cy="1140" r="20.5" fill="url(#kg)"/><path d="M61.73 1140.68 L73.07 1151.25" stroke="#efe6f5" stroke-width="4"/></svg>
<div class="t" style="top:1005px;font-size:22.5px;line-height:22.5px;color:#f3ebf8;left:24px;letter-spacing:0.8px;" id="cut1"><span class="m">Cutoff</span></div>
<div class="t" style="top:1077px;font-size:23px;line-height:23px;color:#76717a;left:22px;" id="smooth"><span class="m">Smooth</span></div>
<div class="t" style="top:1231px;font-size:38.5px;line-height:38.5px;color:#8a848f;left:54px;" id="ftitle"><span class="g">Filter</span></div>
<div class="t" style="top:1309px;font-size:22.3px;line-height:22.3px;color:#a39da8;left:77px;" id="lp"><span class="m">Load Preset</span></div>
<div class="t" style="top:1239px;font-size:22.5px;line-height:22.5px;color:#f3ebf8;left:357.4px;width:400px;text-align:center;letter-spacing:0.8px;" id="k1"><span class="m">Cutoff</span></div>
<div class="t" style="top:1239px;font-size:21px;line-height:21px;color:#8f8994;left:489.0px;width:400px;text-align:center;" id="k2"><span class="g">Reso</span></div>
<div class="t" style="top:1239px;font-size:22.5px;line-height:22.5px;color:#8f8994;left:663.0px;width:400px;text-align:center;" id="k3"><span class="g">Filter<span style="margin:0 3.5px">/</span>Vowel</span></div>
<div class="t" style="top:1239px;font-size:22.8px;line-height:22.8px;color:#8f8994;left:836.5px;width:400px;text-align:center;" id="k4"><span class="g">Vowel A</span></div>
<div class="t" style="top:1239px;font-size:22.5px;line-height:22.5px;color:#8f8994;left:968.5px;width:400px;text-align:center;" id="k5"><span class="g">Vowel B</span></div>
<div class="t" style="top:1239px;font-size:22px;line-height:22px;color:#8f8994;left:1100.5px;width:400px;text-align:center;" id="k6"><span class="g">Vowel Reso</span></div>
<div class="t" style="top:1239px;font-size:22.3px;line-height:22.3px;color:#8f8994;left:1232.5px;width:400px;text-align:center;" id="k7"><span class="g">Vowel A<span style="margin:0 3.5px">/</span>B</span></div>
<div class="t" style="top:1239px;font-size:22.5px;line-height:22.5px;color:#8f8994;left:1743.0px;width:400px;text-align:center;" id="k8"><span class="g">Dry<span style="margin:0 3.5px">/</span>Wet</span></div>
<div class="t" style="top:1383px;font-size:19px;line-height:19px;color:#f3ebf8;left:422.0px;width:400px;text-align:center;" id="hp1"><span class="m">Highpass</span></div>
<div class="t" style="top:1383px;font-size:19px;line-height:19px;color:#f3ebf8;left:902.0px;width:400px;text-align:center;" id="hp2"><span class="m">Highpass</span></div>
<div class="t" style="top:1383px;font-size:19px;line-height:19px;color:#f3ebf8;left:1742.0px;width:400px;text-align:center;" id="ml2"><span class="m">Mix Linear</span></div>
</body></html>
